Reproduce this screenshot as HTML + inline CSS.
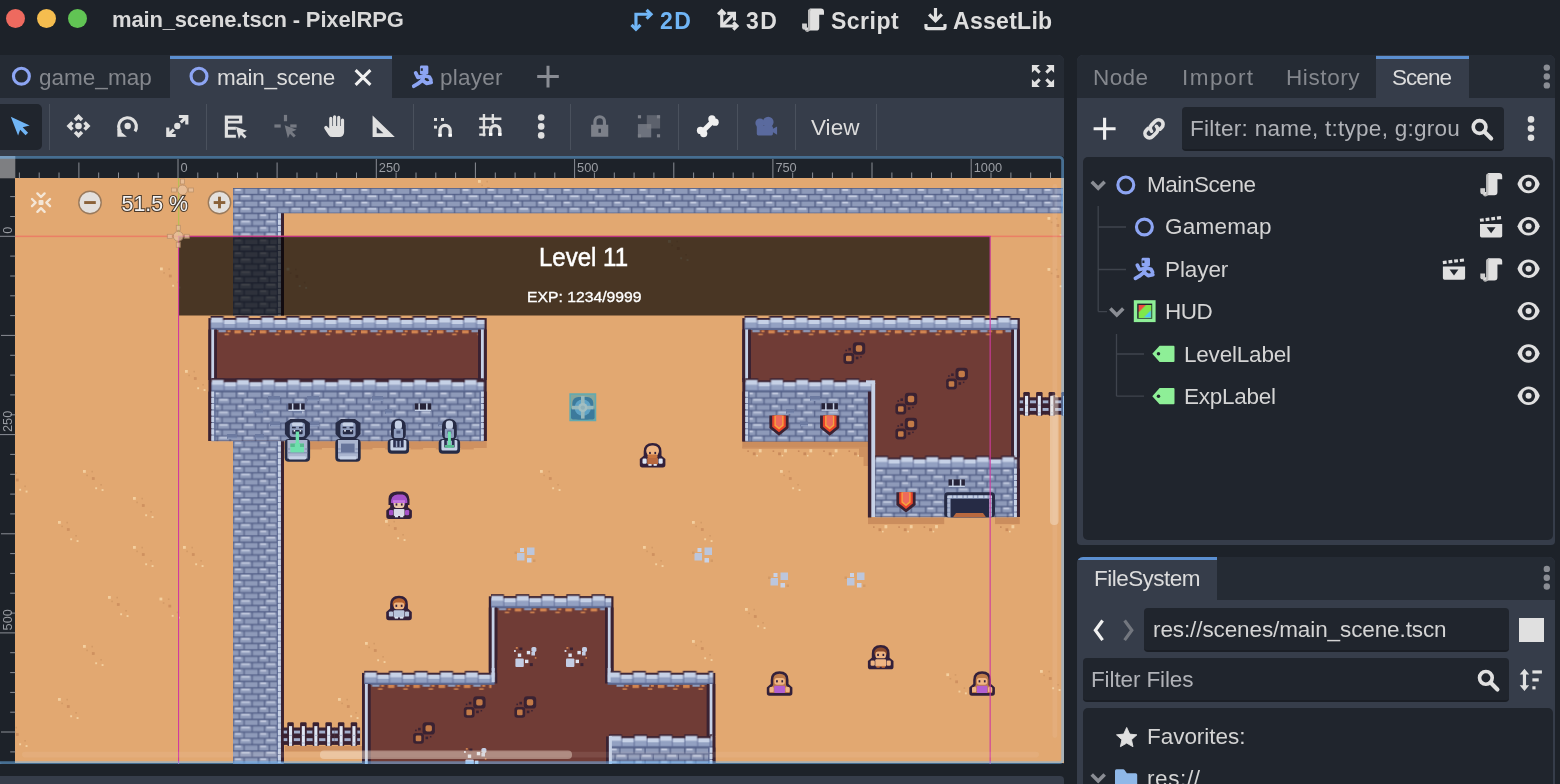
<!DOCTYPE html>
<html><head><meta charset="utf-8"><title>Godot</title>
<style>
*{box-sizing:border-box;margin:0;padding:0}
html,body{width:1560px;height:784px;overflow:hidden;background:#1d2229;font-family:"Liberation Sans",sans-serif;color:#dcdcdc}
.abs{position:absolute}
.t{position:absolute;white-space:nowrap;line-height:1;will-change:transform}
#title{left:113px;top:8px;font-size:21px;font-weight:bold;color:#d9d9d9}
.tl{position:absolute;top:9px;width:19px;height:19px;border-radius:50%}
.mode{position:absolute;top:8px;font-size:23px;font-weight:bold;color:#dedede}
/* panels */
#mainpanel{left:0;top:55px;width:1064px;height:709px;background:#363d4a;border-radius:0 6px 0 0}
#maintabs{left:0;top:55px;width:1064px;height:43px;background:#252b34;border-radius:0 6px 0 0}
.tab{position:absolute;top:55px;height:43px;background:#363d4a}
.tab .line{position:absolute;left:0;right:0;top:0.7px;height:3px;background:#5b8fd0}
.tabtxt{position:absolute;font-size:22px;top:66px;white-space:nowrap;line-height:1}
.dim{color:#85888e}
.sep{position:absolute;top:104px;width:1px;height:46px;background:#4a515d}
#dockR{left:1077px;top:55px;width:478px;height:490px;background:#363d4a;border-radius:6px 6px 4px 4px}
#dockRtabs{left:1077px;top:55px;width:478px;height:43px;background:#252b34;border-radius:6px 6px 0 0}
#tree{left:1083px;top:157px;width:470px;height:383px;background:#20252d;border-radius:5px}
#dockF{left:1077px;top:557px;width:478px;height:240px;background:#363d4a;border-radius:6px 6px 0 0}
#dockFtabs{left:1077px;top:557px;width:478px;height:43px;background:#252b34;border-radius:6px 6px 0 0}
.input{position:absolute;background:#20252d;border-radius:4px;border-bottom:2px solid #1a1e25}
.tr{position:absolute;font-size:22px;white-space:nowrap;line-height:1;color:#d6d6d6}
svg{position:absolute;overflow:visible;will-change:transform}
</style></head><body>
<!-- title bar -->
<div class="tl" style="left:6px;background:#ee6a5f"></div>
<div class="tl" style="left:37px;background:#f5bd4f"></div>
<div class="tl" style="left:68px;background:#61c454"></div>

<!-- main panel -->
<div id="mainpanel" class="abs"></div>
<div id="maintabs" class="abs"></div>
<div class="tab" style="left:170px;width:222px"><div class="line"></div></div>

<!-- toolbar -->
<div class="abs" style="left:0;top:104px;width:42px;height:46px;background:#20252d;border-radius:0 5px 5px 0"></div>
<div class="sep" style="left:49px"></div>
<div class="sep" style="left:206px"></div>
<div class="sep" style="left:413px"></div>
<div class="sep" style="left:570px"></div>
<div class="sep" style="left:678px"></div>
<div class="sep" style="left:737px"></div>
<div class="sep" style="left:795px"></div>
<div class="sep" style="left:876px"></div>

<!-- right dock -->
<div id="dockR" class="abs"></div>
<div id="dockRtabs" class="abs"></div>
<div class="tab" style="left:1376px;width:93px"><div class="line"></div></div>
<div class="input" style="left:1181.5px;top:107px;width:322.5px;height:44px"></div>
<div id="tree" class="abs"></div>

<!-- filesystem dock -->
<div id="dockF" class="abs"></div>
<div id="dockFtabs" class="abs"></div>
<div class="tab" style="left:1077px;top:557px;width:140px;border-radius:6px 0 0 0;overflow:hidden"><div class="line" style="top:0"></div></div>
<div class="input" style="left:1144px;top:608px;width:365px;height:44px"></div>
<div class="abs" style="left:1519px;top:618px;width:25px;height:24px;background:#e0e0e0"></div>
<div class="input" style="left:1083px;top:658px;width:426px;height:44px"></div>
<div class="abs" style="left:1083px;top:708px;width:470px;height:90px;background:#20252d;border-radius:5px"></div>

<!-- bottom strip -->
<div class="abs" style="left:0;top:776px;width:1064px;height:10px;background:#363d4a;border-radius:0 4px 0 0"></div>
<svg style="left:0;top:156px" width="1064" height="609" viewBox="0 156 1064 609" shape-rendering="auto">
<defs>
<pattern id="bk" width="25.3" height="12.65" patternUnits="userSpaceOnUse">
<rect width="25.3" height="12.65" fill="#525e86"/>
<rect x="0.6" y="0.8" width="9.6" height="5" fill="#8e9ab9"/><rect x="1.6" y="1.1" width="6" height="1.6" fill="#cfd6e8"/>
<rect x="11.4" y="0.8" width="13.1" height="5" fill="#8e9ab9"/>
<rect x="-5.8" y="7.1" width="11.2" height="5" fill="#8e9ab9"/><rect x="19.5" y="7.1" width="11.2" height="5" fill="#8e9ab9"/>
<rect x="6.6" y="7.1" width="11.7" height="5" fill="#8e9ab9"/><rect x="8" y="7.4" width="8.6" height="1.6" fill="#cfd6e8"/>
</pattern>
<pattern id="cap" width="25.3" height="14" patternUnits="userSpaceOnUse">
<rect x="0" y="3" width="25.3" height="11" fill="#63709a"/>
<rect x="-0.6" y="0" width="13.6" height="4" fill="#3a2232"/><rect x="12.4" y="2.1" width="13.4" height="2.4" fill="#3a2232"/><rect x="24.7" y="0" width="0.6" height="4" fill="#3a2232"/>
<rect x="0.5" y="1.6" width="11.8" height="5.2" fill="#c6d1e6"/><rect x="0.5" y="6.8" width="11.8" height="5" fill="#93a1c2"/>
<rect x="13.2" y="3.8" width="11.6" height="4.2" fill="#c6d1e6"/><rect x="13.2" y="8" width="11.6" height="3.8" fill="#93a1c2"/>
<rect x="0" y="12.3" width="25.3" height="1.7" fill="#5d6a92"/>
</pattern>
<pattern id="deb" width="25.3" height="8" patternUnits="userSpaceOnUse">
<rect x="1.5" y="0.3" width="7.5" height="2.6" fill="#8f9dbe"/><rect x="10.5" y="1" width="3" height="2" fill="#d18450"/>
<rect x="17.5" y="1" width="6.5" height="3.2" fill="#d18450"/><rect x="7.5" y="4.4" width="4.5" height="1.6" fill="#d18450"/>
</pattern>
<clipPath id="vp"><rect x="15" y="178" width="1049" height="586"/></clipPath>
</defs>
<rect x="0" y="156" width="1064" height="608" rx="3" fill="#1d2229"/>
<rect x="0" y="156" width="15.3" height="22.3" fill="#7e7f82"/>
<g clip-path="url(#vp)">
<rect x="15" y="178" width="1049" height="585" fill="#e2a871"/>
<rect x="160.0" y="267.5" width="2.8" height="2.8" fill="#f3cf9f"/>
<rect x="163.3" y="272.1" width="1.6" height="1.6" fill="#d39a66"/>
<rect x="168.4" y="268.3" width="1.6" height="1.6" fill="#d39a66"/>
<rect x="168.9" y="274.6" width="2.8" height="2.8" fill="#cf9160"/>
<rect x="177.3" y="281.5" width="1.6" height="1.6" fill="#d39a66"/>
<rect x="172.2" y="284.8" width="1.9" height="1.9" fill="#f3cf9f"/>
<rect x="178.6" y="286.6" width="1.9" height="1.9" fill="#f3cf9f"/>
<rect x="286.6" y="267.8" width="2.8" height="2.8" fill="#f3cf9f"/>
<rect x="289.9" y="272.4" width="1.6" height="1.6" fill="#d39a66"/>
<rect x="295.0" y="268.6" width="1.6" height="1.6" fill="#d39a66"/>
<rect x="295.5" y="274.9" width="2.8" height="2.8" fill="#cf9160"/>
<rect x="303.9" y="281.8" width="1.6" height="1.6" fill="#d39a66"/>
<rect x="298.8" y="285.1" width="1.9" height="1.9" fill="#f3cf9f"/>
<rect x="305.2" y="286.9" width="1.9" height="1.9" fill="#f3cf9f"/>
<rect x="185.0" y="370.0" width="2.8" height="2.8" fill="#f3cf9f"/>
<rect x="188.3" y="374.6" width="1.6" height="1.6" fill="#d39a66"/>
<rect x="193.4" y="370.8" width="1.6" height="1.6" fill="#d39a66"/>
<rect x="193.9" y="377.1" width="2.8" height="2.8" fill="#cf9160"/>
<rect x="202.3" y="384.0" width="1.6" height="1.6" fill="#d39a66"/>
<rect x="197.2" y="387.3" width="1.9" height="1.9" fill="#f3cf9f"/>
<rect x="203.6" y="389.1" width="1.9" height="1.9" fill="#f3cf9f"/>
<rect x="83.0" y="470.0" width="2.8" height="2.8" fill="#f3cf9f"/>
<rect x="86.3" y="474.6" width="1.6" height="1.6" fill="#d39a66"/>
<rect x="91.4" y="470.8" width="1.6" height="1.6" fill="#d39a66"/>
<rect x="91.9" y="477.1" width="2.8" height="2.8" fill="#cf9160"/>
<rect x="100.3" y="484.0" width="1.6" height="1.6" fill="#d39a66"/>
<rect x="95.2" y="487.3" width="1.9" height="1.9" fill="#f3cf9f"/>
<rect x="101.6" y="489.1" width="1.9" height="1.9" fill="#f3cf9f"/>
<rect x="133.0" y="497.0" width="2.8" height="2.8" fill="#f3cf9f"/>
<rect x="136.3" y="501.6" width="1.6" height="1.6" fill="#d39a66"/>
<rect x="141.4" y="497.8" width="1.6" height="1.6" fill="#d39a66"/>
<rect x="141.9" y="504.1" width="2.8" height="2.8" fill="#cf9160"/>
<rect x="150.3" y="511.0" width="1.6" height="1.6" fill="#d39a66"/>
<rect x="145.2" y="514.3" width="1.9" height="1.9" fill="#f3cf9f"/>
<rect x="151.6" y="516.1" width="1.9" height="1.9" fill="#f3cf9f"/>
<rect x="58.0" y="521.0" width="2.8" height="2.8" fill="#f3cf9f"/>
<rect x="61.3" y="525.6" width="1.6" height="1.6" fill="#d39a66"/>
<rect x="66.4" y="521.8" width="1.6" height="1.6" fill="#d39a66"/>
<rect x="66.9" y="528.1" width="2.8" height="2.8" fill="#cf9160"/>
<rect x="75.3" y="535.0" width="1.6" height="1.6" fill="#d39a66"/>
<rect x="70.2" y="538.3" width="1.9" height="1.9" fill="#f3cf9f"/>
<rect x="76.6" y="540.1" width="1.9" height="1.9" fill="#f3cf9f"/>
<rect x="108.0" y="596.0" width="2.8" height="2.8" fill="#f3cf9f"/>
<rect x="111.3" y="600.6" width="1.6" height="1.6" fill="#d39a66"/>
<rect x="116.4" y="596.8" width="1.6" height="1.6" fill="#d39a66"/>
<rect x="116.9" y="603.1" width="2.8" height="2.8" fill="#cf9160"/>
<rect x="125.3" y="610.0" width="1.6" height="1.6" fill="#d39a66"/>
<rect x="120.2" y="613.3" width="1.9" height="1.9" fill="#f3cf9f"/>
<rect x="126.6" y="615.1" width="1.9" height="1.9" fill="#f3cf9f"/>
<rect x="159.5" y="597.6" width="2.8" height="2.8" fill="#f3cf9f"/>
<rect x="162.8" y="602.2" width="1.6" height="1.6" fill="#d39a66"/>
<rect x="167.9" y="598.4" width="1.6" height="1.6" fill="#d39a66"/>
<rect x="168.4" y="604.7" width="2.8" height="2.8" fill="#cf9160"/>
<rect x="176.8" y="611.6" width="1.6" height="1.6" fill="#d39a66"/>
<rect x="171.7" y="614.9" width="1.9" height="1.9" fill="#f3cf9f"/>
<rect x="178.1" y="616.7" width="1.9" height="1.9" fill="#f3cf9f"/>
<rect x="83.0" y="645.0" width="2.8" height="2.8" fill="#f3cf9f"/>
<rect x="86.3" y="649.6" width="1.6" height="1.6" fill="#d39a66"/>
<rect x="91.4" y="645.8" width="1.6" height="1.6" fill="#d39a66"/>
<rect x="91.9" y="652.1" width="2.8" height="2.8" fill="#cf9160"/>
<rect x="100.3" y="659.0" width="1.6" height="1.6" fill="#d39a66"/>
<rect x="95.2" y="662.3" width="1.9" height="1.9" fill="#f3cf9f"/>
<rect x="101.6" y="664.1" width="1.9" height="1.9" fill="#f3cf9f"/>
<rect x="58.0" y="698.0" width="2.8" height="2.8" fill="#f3cf9f"/>
<rect x="61.3" y="702.6" width="1.6" height="1.6" fill="#d39a66"/>
<rect x="66.4" y="698.8" width="1.6" height="1.6" fill="#d39a66"/>
<rect x="66.9" y="705.1" width="2.8" height="2.8" fill="#cf9160"/>
<rect x="75.3" y="712.0" width="1.6" height="1.6" fill="#d39a66"/>
<rect x="70.2" y="715.3" width="1.9" height="1.9" fill="#f3cf9f"/>
<rect x="76.6" y="717.1" width="1.9" height="1.9" fill="#f3cf9f"/>
<rect x="133.0" y="546.0" width="2.8" height="2.8" fill="#f3cf9f"/>
<rect x="136.3" y="550.6" width="1.6" height="1.6" fill="#d39a66"/>
<rect x="141.4" y="546.8" width="1.6" height="1.6" fill="#d39a66"/>
<rect x="141.9" y="553.1" width="2.8" height="2.8" fill="#cf9160"/>
<rect x="150.3" y="560.0" width="1.6" height="1.6" fill="#d39a66"/>
<rect x="145.2" y="563.3" width="1.9" height="1.9" fill="#f3cf9f"/>
<rect x="151.6" y="565.1" width="1.9" height="1.9" fill="#f3cf9f"/>
<rect x="183.0" y="546.0" width="2.8" height="2.8" fill="#f3cf9f"/>
<rect x="186.3" y="550.6" width="1.6" height="1.6" fill="#d39a66"/>
<rect x="191.4" y="546.8" width="1.6" height="1.6" fill="#d39a66"/>
<rect x="191.9" y="553.1" width="2.8" height="2.8" fill="#cf9160"/>
<rect x="200.3" y="560.0" width="1.6" height="1.6" fill="#d39a66"/>
<rect x="195.2" y="563.3" width="1.9" height="1.9" fill="#f3cf9f"/>
<rect x="201.6" y="565.1" width="1.9" height="1.9" fill="#f3cf9f"/>
<rect x="7.0" y="471.5" width="2.8" height="2.8" fill="#f3cf9f"/>
<rect x="10.3" y="476.1" width="1.6" height="1.6" fill="#d39a66"/>
<rect x="15.4" y="472.3" width="1.6" height="1.6" fill="#d39a66"/>
<rect x="15.9" y="478.6" width="2.8" height="2.8" fill="#cf9160"/>
<rect x="24.3" y="485.5" width="1.6" height="1.6" fill="#d39a66"/>
<rect x="19.2" y="488.8" width="1.9" height="1.9" fill="#f3cf9f"/>
<rect x="25.6" y="490.6" width="1.9" height="1.9" fill="#f3cf9f"/>
<rect x="7.0" y="726.0" width="2.8" height="2.8" fill="#f3cf9f"/>
<rect x="10.3" y="730.6" width="1.6" height="1.6" fill="#d39a66"/>
<rect x="15.4" y="726.8" width="1.6" height="1.6" fill="#d39a66"/>
<rect x="15.9" y="733.1" width="2.8" height="2.8" fill="#cf9160"/>
<rect x="24.3" y="740.0" width="1.6" height="1.6" fill="#d39a66"/>
<rect x="19.2" y="743.3" width="1.9" height="1.9" fill="#f3cf9f"/>
<rect x="25.6" y="745.1" width="1.9" height="1.9" fill="#f3cf9f"/>
<rect x="540.0" y="470.0" width="2.8" height="2.8" fill="#f3cf9f"/>
<rect x="543.3" y="474.6" width="1.6" height="1.6" fill="#d39a66"/>
<rect x="548.4" y="470.8" width="1.6" height="1.6" fill="#d39a66"/>
<rect x="548.9" y="477.1" width="2.8" height="2.8" fill="#cf9160"/>
<rect x="557.3" y="484.0" width="1.6" height="1.6" fill="#d39a66"/>
<rect x="552.2" y="487.3" width="1.9" height="1.9" fill="#f3cf9f"/>
<rect x="558.6" y="489.1" width="1.9" height="1.9" fill="#f3cf9f"/>
<rect x="385.0" y="520.0" width="2.8" height="2.8" fill="#f3cf9f"/>
<rect x="388.3" y="524.6" width="1.6" height="1.6" fill="#d39a66"/>
<rect x="393.4" y="520.8" width="1.6" height="1.6" fill="#d39a66"/>
<rect x="393.9" y="527.1" width="2.8" height="2.8" fill="#cf9160"/>
<rect x="402.3" y="534.0" width="1.6" height="1.6" fill="#d39a66"/>
<rect x="397.2" y="537.3" width="1.9" height="1.9" fill="#f3cf9f"/>
<rect x="403.6" y="539.1" width="1.9" height="1.9" fill="#f3cf9f"/>
<rect x="643.0" y="546.0" width="2.8" height="2.8" fill="#f3cf9f"/>
<rect x="646.3" y="550.6" width="1.6" height="1.6" fill="#d39a66"/>
<rect x="651.4" y="546.8" width="1.6" height="1.6" fill="#d39a66"/>
<rect x="651.9" y="553.1" width="2.8" height="2.8" fill="#cf9160"/>
<rect x="660.3" y="560.0" width="1.6" height="1.6" fill="#d39a66"/>
<rect x="655.2" y="563.3" width="1.9" height="1.9" fill="#f3cf9f"/>
<rect x="661.6" y="565.1" width="1.9" height="1.9" fill="#f3cf9f"/>
<rect x="692.0" y="521.0" width="2.8" height="2.8" fill="#f3cf9f"/>
<rect x="695.3" y="525.6" width="1.6" height="1.6" fill="#d39a66"/>
<rect x="700.4" y="521.8" width="1.6" height="1.6" fill="#d39a66"/>
<rect x="700.9" y="528.1" width="2.8" height="2.8" fill="#cf9160"/>
<rect x="709.3" y="535.0" width="1.6" height="1.6" fill="#d39a66"/>
<rect x="704.2" y="538.3" width="1.9" height="1.9" fill="#f3cf9f"/>
<rect x="710.6" y="540.1" width="1.9" height="1.9" fill="#f3cf9f"/>
<rect x="466.0" y="700.0" width="2.8" height="2.8" fill="#f3cf9f"/>
<rect x="469.3" y="704.6" width="1.6" height="1.6" fill="#d39a66"/>
<rect x="474.4" y="700.8" width="1.6" height="1.6" fill="#d39a66"/>
<rect x="474.9" y="707.1" width="2.8" height="2.8" fill="#cf9160"/>
<rect x="483.3" y="714.0" width="1.6" height="1.6" fill="#d39a66"/>
<rect x="478.2" y="717.3" width="1.9" height="1.9" fill="#f3cf9f"/>
<rect x="484.6" y="719.1" width="1.9" height="1.9" fill="#f3cf9f"/>
<rect x="338.0" y="698.0" width="2.8" height="2.8" fill="#f3cf9f"/>
<rect x="341.3" y="702.6" width="1.6" height="1.6" fill="#d39a66"/>
<rect x="346.4" y="698.8" width="1.6" height="1.6" fill="#d39a66"/>
<rect x="346.9" y="705.1" width="2.8" height="2.8" fill="#cf9160"/>
<rect x="355.3" y="712.0" width="1.6" height="1.6" fill="#d39a66"/>
<rect x="350.2" y="715.3" width="1.9" height="1.9" fill="#f3cf9f"/>
<rect x="356.6" y="717.1" width="1.9" height="1.9" fill="#f3cf9f"/>
<rect x="365.0" y="642.0" width="2.8" height="2.8" fill="#f3cf9f"/>
<rect x="368.3" y="646.6" width="1.6" height="1.6" fill="#d39a66"/>
<rect x="373.4" y="642.8" width="1.6" height="1.6" fill="#d39a66"/>
<rect x="373.9" y="649.1" width="2.8" height="2.8" fill="#cf9160"/>
<rect x="382.3" y="656.0" width="1.6" height="1.6" fill="#d39a66"/>
<rect x="377.2" y="659.3" width="1.9" height="1.9" fill="#f3cf9f"/>
<rect x="383.6" y="661.1" width="1.9" height="1.9" fill="#f3cf9f"/>
<rect x="1047.5" y="217.0" width="2.8" height="2.8" fill="#f3cf9f"/>
<rect x="1050.8" y="221.6" width="1.6" height="1.6" fill="#d39a66"/>
<rect x="1055.9" y="217.8" width="1.6" height="1.6" fill="#d39a66"/>
<rect x="1056.4" y="224.1" width="2.8" height="2.8" fill="#cf9160"/>
<rect x="1064.8" y="231.0" width="1.6" height="1.6" fill="#d39a66"/>
<rect x="1059.7" y="234.3" width="1.9" height="1.9" fill="#f3cf9f"/>
<rect x="1066.1" y="236.1" width="1.9" height="1.9" fill="#f3cf9f"/>
<rect x="1047.5" y="268.0" width="2.8" height="2.8" fill="#f3cf9f"/>
<rect x="1050.8" y="272.6" width="1.6" height="1.6" fill="#d39a66"/>
<rect x="1055.9" y="268.8" width="1.6" height="1.6" fill="#d39a66"/>
<rect x="1056.4" y="275.1" width="2.8" height="2.8" fill="#cf9160"/>
<rect x="1064.8" y="282.0" width="1.6" height="1.6" fill="#d39a66"/>
<rect x="1059.7" y="285.3" width="1.9" height="1.9" fill="#f3cf9f"/>
<rect x="1066.1" y="287.1" width="1.9" height="1.9" fill="#f3cf9f"/>
<rect x="478.0" y="180.0" width="2.8" height="2.8" fill="#f3cf9f"/>
<rect x="481.3" y="184.6" width="1.6" height="1.6" fill="#d39a66"/>
<rect x="486.4" y="180.8" width="1.6" height="1.6" fill="#d39a66"/>
<rect x="486.9" y="187.1" width="2.8" height="2.8" fill="#cf9160"/>
<rect x="495.3" y="194.0" width="1.6" height="1.6" fill="#d39a66"/>
<rect x="490.2" y="197.3" width="1.9" height="1.9" fill="#f3cf9f"/>
<rect x="496.6" y="199.1" width="1.9" height="1.9" fill="#f3cf9f"/>
<rect x="780.0" y="470.0" width="2.8" height="2.8" fill="#f3cf9f"/>
<rect x="783.3" y="474.6" width="1.6" height="1.6" fill="#d39a66"/>
<rect x="788.4" y="470.8" width="1.6" height="1.6" fill="#d39a66"/>
<rect x="788.9" y="477.1" width="2.8" height="2.8" fill="#cf9160"/>
<rect x="797.3" y="484.0" width="1.6" height="1.6" fill="#d39a66"/>
<rect x="792.2" y="487.3" width="1.9" height="1.9" fill="#f3cf9f"/>
<rect x="798.6" y="489.1" width="1.9" height="1.9" fill="#f3cf9f"/>
<rect x="946.3" y="673.3" width="2.8" height="2.8" fill="#f3cf9f"/>
<rect x="949.6" y="677.9" width="1.6" height="1.6" fill="#d39a66"/>
<rect x="954.7" y="674.1" width="1.6" height="1.6" fill="#d39a66"/>
<rect x="955.2" y="680.4" width="2.8" height="2.8" fill="#cf9160"/>
<rect x="963.6" y="687.3" width="1.6" height="1.6" fill="#d39a66"/>
<rect x="958.5" y="690.6" width="1.9" height="1.9" fill="#f3cf9f"/>
<rect x="964.9" y="692.4" width="1.9" height="1.9" fill="#f3cf9f"/>
<rect x="1040.0" y="670.0" width="2.8" height="2.8" fill="#f3cf9f"/>
<rect x="1043.3" y="674.6" width="1.6" height="1.6" fill="#d39a66"/>
<rect x="1048.4" y="670.8" width="1.6" height="1.6" fill="#d39a66"/>
<rect x="1048.9" y="677.1" width="2.8" height="2.8" fill="#cf9160"/>
<rect x="1057.3" y="684.0" width="1.6" height="1.6" fill="#d39a66"/>
<rect x="1052.2" y="687.3" width="1.9" height="1.9" fill="#f3cf9f"/>
<rect x="1058.6" y="689.1" width="1.9" height="1.9" fill="#f3cf9f"/>
<rect x="692.0" y="640.0" width="2.8" height="2.8" fill="#f3cf9f"/>
<rect x="695.3" y="644.6" width="1.6" height="1.6" fill="#d39a66"/>
<rect x="700.4" y="640.8" width="1.6" height="1.6" fill="#d39a66"/>
<rect x="700.9" y="647.1" width="2.8" height="2.8" fill="#cf9160"/>
<rect x="709.3" y="654.0" width="1.6" height="1.6" fill="#d39a66"/>
<rect x="704.2" y="657.3" width="1.9" height="1.9" fill="#f3cf9f"/>
<rect x="710.6" y="659.1" width="1.9" height="1.9" fill="#f3cf9f"/>
<rect x="605.0" y="750.0" width="2.8" height="2.8" fill="#f3cf9f"/>
<rect x="608.3" y="754.6" width="1.6" height="1.6" fill="#d39a66"/>
<rect x="613.4" y="750.8" width="1.6" height="1.6" fill="#d39a66"/>
<rect x="613.9" y="757.1" width="2.8" height="2.8" fill="#cf9160"/>
<rect x="622.3" y="764.0" width="1.6" height="1.6" fill="#d39a66"/>
<rect x="617.2" y="767.3" width="1.9" height="1.9" fill="#f3cf9f"/>
<rect x="623.6" y="769.1" width="1.9" height="1.9" fill="#f3cf9f"/>
<rect x="655.0" y="750.0" width="2.8" height="2.8" fill="#f3cf9f"/>
<rect x="658.3" y="754.6" width="1.6" height="1.6" fill="#d39a66"/>
<rect x="663.4" y="750.8" width="1.6" height="1.6" fill="#d39a66"/>
<rect x="663.9" y="757.1" width="2.8" height="2.8" fill="#cf9160"/>
<rect x="672.3" y="764.0" width="1.6" height="1.6" fill="#d39a66"/>
<rect x="667.2" y="767.3" width="1.9" height="1.9" fill="#f3cf9f"/>
<rect x="673.6" y="769.1" width="1.9" height="1.9" fill="#f3cf9f"/>
<rect x="520.0" y="608.0" width="2.8" height="2.8" fill="#f3cf9f"/>
<rect x="523.3" y="612.6" width="1.6" height="1.6" fill="#d39a66"/>
<rect x="528.4" y="608.8" width="1.6" height="1.6" fill="#d39a66"/>
<rect x="528.9" y="615.1" width="2.8" height="2.8" fill="#cf9160"/>
<rect x="537.3" y="622.0" width="1.6" height="1.6" fill="#d39a66"/>
<rect x="532.2" y="625.3" width="1.9" height="1.9" fill="#f3cf9f"/>
<rect x="538.6" y="627.1" width="1.9" height="1.9" fill="#f3cf9f"/>
<rect x="745.0" y="608.0" width="2.8" height="2.8" fill="#f3cf9f"/>
<rect x="748.3" y="612.6" width="1.6" height="1.6" fill="#d39a66"/>
<rect x="753.4" y="608.8" width="1.6" height="1.6" fill="#d39a66"/>
<rect x="753.9" y="615.1" width="2.8" height="2.8" fill="#cf9160"/>
<rect x="762.3" y="622.0" width="1.6" height="1.6" fill="#d39a66"/>
<rect x="757.2" y="625.3" width="1.9" height="1.9" fill="#f3cf9f"/>
<rect x="763.6" y="627.1" width="1.9" height="1.9" fill="#f3cf9f"/>
<rect x="668.0" y="240.0" width="2.8" height="2.8" fill="#f3cf9f"/>
<rect x="671.3" y="244.6" width="1.6" height="1.6" fill="#d39a66"/>
<rect x="676.4" y="240.8" width="1.6" height="1.6" fill="#d39a66"/>
<rect x="676.9" y="247.1" width="2.8" height="2.8" fill="#cf9160"/>
<rect x="685.3" y="254.0" width="1.6" height="1.6" fill="#d39a66"/>
<rect x="680.2" y="257.3" width="1.9" height="1.9" fill="#f3cf9f"/>
<rect x="686.6" y="259.1" width="1.9" height="1.9" fill="#f3cf9f"/>
<svg x="233.3" y="188.0" width="830.0" height="25.3" overflow="hidden"><rect width="830.0" height="25.3" fill="url(#bk)"/></svg>
<svg x="233.3" y="213.3" width="50.6" height="552.0" overflow="hidden"><rect width="50.6" height="552.0" fill="url(#bk)"/></svg>
<rect x="276.8" y="213.3" width="1.2" height="549.0" fill="#5a6791"/>
<line x1="279.4" y1="213.3" x2="279.4" y2="763" stroke="#c6d1e6" stroke-width="3" stroke-dasharray="5.2 1.1"/>
<rect x="281.0" y="213.3" width="3.0" height="549.0" fill="#3a2232"/>
<rect x="284.0" y="441.0" width="202.7" height="7.0" fill="#cf9160"/>
<path d="M284,447.9v1.6h12.6v-1.6h12.7v1.6h12.6v-1.6h12.7v1.6h12.6v-1.6h12.7v1.6h12.6v-1.6h12.7v1.6h12.6v-1.6h12.7v1.6h12.6v-1.6h12.7v1.6h12.6v-1.6h12.7v1.6h12.6v-1.6h12.7z" fill="#cf9160"/>
<rect x="208.4" y="315.6" width="278.3" height="3.0" fill="#e2a871"/>
<rect x="208.4" y="318.1" width="278.3" height="122.9" fill="#3a2232"/>
<rect x="216.9" y="329.0" width="261.3" height="51.5" fill="#703c36"/>
<svg x="216.9" y="329.3" width="261.3" height="8.0" overflow="hidden"><rect width="261.3" height="8.0" fill="url(#deb)"/></svg>
<svg x="210.6" y="316.0" width="273.9" height="14.0" overflow="hidden"><rect width="273.9" height="14.0" fill="url(#cap)"/></svg>
<rect x="208.4" y="329.5" width="2.9" height="50.5" fill="#3a2232"/>
<rect x="211.3" y="329.5" width="3.0" height="50.5" fill="#c6d1e6"/>
<rect x="214.3" y="329.5" width="2.6" height="50.5" fill="#3a2232"/>
<rect x="483.8" y="329.5" width="2.9" height="50.5" fill="#3a2232"/>
<rect x="480.8" y="329.5" width="3.0" height="50.5" fill="#c6d1e6"/>
<rect x="478.2" y="329.5" width="2.6" height="50.5" fill="#3a2232"/>
<rect x="211.3" y="378.3" width="272.5" height="2.0" fill="#3a2232"/>
<svg x="211.3" y="378.3" width="272.5" height="14.0" overflow="hidden"><rect width="272.5" height="14.0" fill="url(#cap)"/></svg>
<svg x="211.3" y="391.5" width="272.5" height="49.5" overflow="hidden"><rect width="272.5" height="49.5" fill="url(#bk)"/></svg>
<rect x="208.4" y="391.5" width="2.9" height="49.5" fill="#3a2232"/>
<line x1="212.8" y1="391.5" x2="212.8" y2="441.0" stroke="#c6d1e6" stroke-width="3" stroke-dasharray="5.2 1.1"/>
<rect x="214.3" y="391.5" width="1.3" height="49.5" fill="#5a6791"/>
<rect x="483.8" y="391.5" width="2.9" height="49.5" fill="#3a2232"/>
<line x1="482.3" y1="391.5" x2="482.3" y2="441.0" stroke="#c6d1e6" stroke-width="3" stroke-dasharray="5.2 1.1"/>
<rect x="479.5" y="391.5" width="1.3" height="49.5" fill="#5a6791"/>
<rect x="742.3" y="441.4" width="126.0" height="6.8" fill="#cb8d5d"/>
<rect x="747.3" y="450.4" width="1.6" height="1.6" fill="#c98a5b"/>
<rect x="752.8" y="452.4" width="2.8" height="2.8" fill="#c98a5b"/>
<rect x="758.8" y="449.2" width="2.8" height="3.2" fill="#f3cf9f"/>
<rect x="756.3" y="454.9" width="1.6" height="1.6" fill="#f3cf9f"/>
<rect x="772.6" y="450.4" width="1.6" height="1.6" fill="#c98a5b"/>
<rect x="778.1" y="452.4" width="2.8" height="2.8" fill="#c98a5b"/>
<rect x="784.1" y="449.2" width="2.8" height="3.2" fill="#f3cf9f"/>
<rect x="781.6" y="454.9" width="1.6" height="1.6" fill="#f3cf9f"/>
<rect x="797.9" y="450.4" width="1.6" height="1.6" fill="#c98a5b"/>
<rect x="803.4" y="452.4" width="2.8" height="2.8" fill="#c98a5b"/>
<rect x="809.4" y="449.2" width="2.8" height="3.2" fill="#f3cf9f"/>
<rect x="806.9" y="454.9" width="1.6" height="1.6" fill="#f3cf9f"/>
<rect x="823.2" y="450.4" width="1.6" height="1.6" fill="#c98a5b"/>
<rect x="828.7" y="452.4" width="2.8" height="2.8" fill="#c98a5b"/>
<rect x="834.7" y="449.2" width="2.8" height="3.2" fill="#f3cf9f"/>
<rect x="832.2" y="454.9" width="1.6" height="1.6" fill="#f3cf9f"/>
<rect x="848.5" y="450.4" width="1.6" height="1.6" fill="#c98a5b"/>
<rect x="854.0" y="452.4" width="2.8" height="2.8" fill="#c98a5b"/>
<rect x="860.0" y="449.2" width="2.8" height="3.2" fill="#f3cf9f"/>
<rect x="857.5" y="454.9" width="1.6" height="1.6" fill="#f3cf9f"/>
<rect x="868.0" y="517.3" width="76.2" height="6.8" fill="#cb8d5d"/>
<rect x="873.0" y="526.3" width="1.6" height="1.6" fill="#c98a5b"/>
<rect x="878.5" y="528.3" width="2.8" height="2.8" fill="#c98a5b"/>
<rect x="884.5" y="525.1" width="2.8" height="3.2" fill="#f3cf9f"/>
<rect x="882.0" y="530.8" width="1.6" height="1.6" fill="#f3cf9f"/>
<rect x="898.3" y="526.3" width="1.6" height="1.6" fill="#c98a5b"/>
<rect x="903.8" y="528.3" width="2.8" height="2.8" fill="#c98a5b"/>
<rect x="909.8" y="525.1" width="2.8" height="3.2" fill="#f3cf9f"/>
<rect x="907.3" y="530.8" width="1.6" height="1.6" fill="#f3cf9f"/>
<rect x="923.6" y="526.3" width="1.6" height="1.6" fill="#c98a5b"/>
<rect x="929.1" y="528.3" width="2.8" height="2.8" fill="#c98a5b"/>
<rect x="935.1" y="525.1" width="2.8" height="3.2" fill="#f3cf9f"/>
<rect x="932.6" y="530.8" width="1.6" height="1.6" fill="#f3cf9f"/>
<rect x="995.0" y="517.3" width="24.8" height="6.8" fill="#cb8d5d"/>
<rect x="1000.0" y="526.3" width="1.6" height="1.6" fill="#c98a5b"/>
<rect x="1005.5" y="528.3" width="2.8" height="2.8" fill="#c98a5b"/>
<rect x="1011.5" y="525.1" width="2.8" height="3.2" fill="#f3cf9f"/>
<rect x="1009.0" y="530.8" width="1.6" height="1.6" fill="#f3cf9f"/>
<rect x="742.3" y="447.0" width="126.0" height="1.6" fill="#cf9160"/>
<rect x="859.0" y="448.0" width="9.0" height="9.0" fill="#cf9160"/>
<rect x="863.5" y="457.0" width="4.5" height="9.0" fill="#cf9160"/>
<rect x="742.3" y="318.1" width="277.5" height="64.0" fill="#3a2232"/>
<rect x="868.0" y="380.0" width="151.8" height="137.0" fill="#3a2232"/>
<rect x="742.3" y="378.0" width="134.0" height="63.4" fill="#3a2232"/>
<rect x="750.8" y="329.0" width="260.5" height="52.0" fill="#703c36"/>
<rect x="875.2" y="380.0" width="136.1" height="78.0" fill="#703c36"/>
<svg x="750.8" y="329.3" width="260.5" height="8.0" overflow="hidden"><rect width="260.5" height="8.0" fill="url(#deb)"/></svg>
<svg x="744.5" y="316.0" width="273.1" height="14.0" overflow="hidden"><rect width="273.1" height="14.0" fill="url(#cap)"/></svg>
<rect x="742.3" y="329.5" width="2.9" height="50.5" fill="#3a2232"/>
<rect x="745.2" y="329.5" width="3.0" height="50.5" fill="#c6d1e6"/>
<rect x="748.2" y="329.5" width="2.6" height="50.5" fill="#3a2232"/>
<rect x="1016.9" y="329.5" width="2.9" height="128.0" fill="#3a2232"/>
<rect x="1013.9" y="329.5" width="3.0" height="128.0" fill="#c6d1e6"/>
<rect x="1011.3" y="329.5" width="2.6" height="128.0" fill="#3a2232"/>
<svg x="745.2" y="378.3" width="126.5" height="14.0" overflow="hidden"><rect width="126.5" height="14.0" fill="url(#cap)"/></svg>
<svg x="745.2" y="391.5" width="125.0" height="50.0" overflow="hidden"><rect width="125.0" height="50.0" fill="url(#bk)"/></svg>
<rect x="742.3" y="391.5" width="2.9" height="50.0" fill="#3a2232"/>
<line x1="746.7" y1="391.5" x2="746.7" y2="441.5" stroke="#c6d1e6" stroke-width="3" stroke-dasharray="5.2 1.1"/>
<rect x="748.2" y="391.5" width="1.3" height="50.0" fill="#5a6791"/>
<rect x="867.9" y="391.5" width="3.4" height="126.0" fill="#3a2232"/>
<rect x="871.3" y="383.0" width="3.9" height="134.0" fill="#c6d1e6"/>
<rect x="866.0" y="380.3" width="9.2" height="3.5" fill="#c6d1e6"/>
<svg x="875.2" y="455.5" width="141.7" height="14.0" overflow="hidden"><rect width="141.7" height="14.0" fill="url(#cap)"/></svg>
<svg x="875.2" y="468.5" width="141.7" height="48.5" overflow="hidden"><rect width="141.7" height="48.5" fill="url(#bk)"/></svg>
<rect x="1016.9" y="468.5" width="2.9" height="48.5" fill="#3a2232"/>
<line x1="1015.4" y1="468.5" x2="1015.4" y2="517.0" stroke="#c6d1e6" stroke-width="3" stroke-dasharray="5.2 1.1"/>
<rect x="1012.6" y="468.5" width="1.3" height="48.5" fill="#5a6791"/>
<rect x="488.8" y="596.3" width="124.7" height="90.0" fill="#3a2232"/>
<rect x="497.3" y="607.0" width="107.7" height="80.0" fill="#703c36"/>
<svg x="497.3" y="607.3" width="107.7" height="8.0" overflow="hidden"><rect width="107.7" height="8.0" fill="url(#deb)"/></svg>
<svg x="491.0" y="594.2" width="120.3" height="14.0" overflow="hidden"><rect width="120.3" height="14.0" fill="url(#cap)"/></svg>
<rect x="488.8" y="607.5" width="2.9" height="64.0" fill="#3a2232"/>
<rect x="491.7" y="607.5" width="3.0" height="64.0" fill="#c6d1e6"/>
<rect x="494.7" y="607.5" width="2.6" height="64.0" fill="#3a2232"/>
<rect x="610.6" y="607.5" width="2.9" height="64.0" fill="#3a2232"/>
<rect x="607.6" y="607.5" width="3.0" height="64.0" fill="#c6d1e6"/>
<rect x="605.0" y="607.5" width="2.6" height="64.0" fill="#3a2232"/>
<rect x="362.0" y="672.9" width="353.3" height="93.0" fill="#3a2232"/>
<rect x="370.5" y="683.5" width="336.3" height="82.0" fill="#703c36"/>
<rect x="497.3" y="660.0" width="107.7" height="30.0" fill="#703c36"/>
<svg x="370.5" y="683.8" width="121.0" height="8.0" overflow="hidden"><rect width="121.0" height="8.0" fill="url(#deb)"/></svg>
<svg x="615.0" y="683.8" width="92.0" height="8.0" overflow="hidden"><rect width="92.0" height="8.0" fill="url(#deb)"/></svg>
<svg x="364.2" y="670.8" width="130.5" height="14.0" overflow="hidden"><rect width="130.5" height="14.0" fill="url(#cap)"/></svg>
<svg x="607.6" y="670.8" width="105.5" height="14.0" overflow="hidden"><rect width="105.5" height="14.0" fill="url(#cap)"/></svg>
<rect x="491.7" y="668.0" width="3.0" height="14.0" fill="#c6d1e6"/>
<rect x="607.6" y="668.0" width="3.0" height="14.0" fill="#c6d1e6"/>
<rect x="362.0" y="684.0" width="2.9" height="80.0" fill="#3a2232"/>
<rect x="364.9" y="684.0" width="3.0" height="80.0" fill="#c6d1e6"/>
<rect x="367.9" y="684.0" width="2.6" height="80.0" fill="#3a2232"/>
<rect x="712.4" y="684.0" width="2.9" height="52.0" fill="#3a2232"/>
<rect x="709.4" y="684.0" width="3.0" height="52.0" fill="#c6d1e6"/>
<rect x="706.8" y="684.0" width="2.6" height="52.0" fill="#3a2232"/>
<rect x="606.0" y="736.4" width="109.3" height="27.0" fill="#3a2232"/>
<svg x="608.9" y="734.3" width="103.5" height="14.0" overflow="hidden"><rect width="103.5" height="14.0" fill="url(#cap)"/></svg>
<svg x="608.9" y="747.5" width="103.5" height="16.0" overflow="hidden"><rect width="103.5" height="16.0" fill="url(#bk)"/></svg>
<rect x="608.9" y="736.0" width="3.0" height="28.0" fill="#c6d1e6"/>
<rect x="712.4" y="747.5" width="2.9" height="16.0" fill="#3a2232"/>
<line x1="710.9" y1="747.5" x2="710.9" y2="763.5" stroke="#c6d1e6" stroke-width="3" stroke-dasharray="5.2 1.1"/>
<rect x="708.1" y="747.5" width="1.3" height="16.0" fill="#5a6791"/>
<rect x="852.8" y="342.3" width="12.4" height="12.4" fill="#3a2232" rx="3.4"/>
<rect x="855.8" y="345.3" width="6.4" height="6.4" fill="#c27a47" rx="1.8"/>
<rect x="843.4" y="353.1" width="10.8" height="10.8" fill="#3a2232" rx="2.8"/>
<rect x="846.0" y="355.7" width="5.6" height="5.6" fill="#c27a47" rx="1.2"/>
<rect x="848.4" y="347.9" width="2.6" height="2.6" fill="#3a2232"/>
<rect x="845.4" y="349.7" width="1.6" height="1.6" fill="#3a2232"/>
<rect x="855.8" y="356.7" width="2.6" height="2.6" fill="#3a2232"/>
<rect x="860.2" y="356.1" width="1.5" height="1.5" fill="#3a2232"/>
<rect x="955.5" y="367.8" width="12.4" height="12.4" fill="#3a2232" rx="3.4"/>
<rect x="958.5" y="370.8" width="6.4" height="6.4" fill="#c27a47" rx="1.8"/>
<rect x="946.1" y="378.6" width="10.8" height="10.8" fill="#3a2232" rx="2.8"/>
<rect x="948.7" y="381.2" width="5.6" height="5.6" fill="#c27a47" rx="1.2"/>
<rect x="951.1" y="373.4" width="2.6" height="2.6" fill="#3a2232"/>
<rect x="948.1" y="375.2" width="1.6" height="1.6" fill="#3a2232"/>
<rect x="958.5" y="382.2" width="2.6" height="2.6" fill="#3a2232"/>
<rect x="962.9" y="381.6" width="1.5" height="1.5" fill="#3a2232"/>
<rect x="904.8" y="392.8" width="12.4" height="12.4" fill="#3a2232" rx="3.4"/>
<rect x="907.8" y="395.8" width="6.4" height="6.4" fill="#c27a47" rx="1.8"/>
<rect x="895.4" y="403.6" width="10.8" height="10.8" fill="#3a2232" rx="2.8"/>
<rect x="898.0" y="406.2" width="5.6" height="5.6" fill="#c27a47" rx="1.2"/>
<rect x="900.4" y="398.4" width="2.6" height="2.6" fill="#3a2232"/>
<rect x="897.4" y="400.2" width="1.6" height="1.6" fill="#3a2232"/>
<rect x="907.8" y="407.2" width="2.6" height="2.6" fill="#3a2232"/>
<rect x="912.2" y="406.6" width="1.5" height="1.5" fill="#3a2232"/>
<rect x="904.8" y="417.8" width="12.4" height="12.4" fill="#3a2232" rx="3.4"/>
<rect x="907.8" y="420.8" width="6.4" height="6.4" fill="#c27a47" rx="1.8"/>
<rect x="895.4" y="428.6" width="10.8" height="10.8" fill="#3a2232" rx="2.8"/>
<rect x="898.0" y="431.2" width="5.6" height="5.6" fill="#c27a47" rx="1.2"/>
<rect x="900.4" y="423.4" width="2.6" height="2.6" fill="#3a2232"/>
<rect x="897.4" y="425.2" width="1.6" height="1.6" fill="#3a2232"/>
<rect x="907.8" y="432.2" width="2.6" height="2.6" fill="#3a2232"/>
<rect x="912.2" y="431.6" width="1.5" height="1.5" fill="#3a2232"/>
<rect x="473.2" y="696.2" width="12.4" height="12.4" fill="#3a2232" rx="3.4"/>
<rect x="476.2" y="699.2" width="6.4" height="6.4" fill="#c27a47" rx="1.8"/>
<rect x="463.8" y="707.0" width="10.8" height="10.8" fill="#3a2232" rx="2.8"/>
<rect x="466.4" y="709.6" width="5.6" height="5.6" fill="#c27a47" rx="1.2"/>
<rect x="468.8" y="701.8" width="2.6" height="2.6" fill="#3a2232"/>
<rect x="465.8" y="703.6" width="1.6" height="1.6" fill="#3a2232"/>
<rect x="476.2" y="710.6" width="2.6" height="2.6" fill="#3a2232"/>
<rect x="480.6" y="710.0" width="1.5" height="1.5" fill="#3a2232"/>
<rect x="523.8" y="696.2" width="12.4" height="12.4" fill="#3a2232" rx="3.4"/>
<rect x="526.8" y="699.2" width="6.4" height="6.4" fill="#c27a47" rx="1.8"/>
<rect x="514.4" y="707.0" width="10.8" height="10.8" fill="#3a2232" rx="2.8"/>
<rect x="517.0" y="709.6" width="5.6" height="5.6" fill="#c27a47" rx="1.2"/>
<rect x="519.4" y="701.8" width="2.6" height="2.6" fill="#3a2232"/>
<rect x="516.4" y="703.6" width="1.6" height="1.6" fill="#3a2232"/>
<rect x="526.8" y="710.6" width="2.6" height="2.6" fill="#3a2232"/>
<rect x="531.2" y="710.0" width="1.5" height="1.5" fill="#3a2232"/>
<rect x="422.5" y="722.2" width="12.4" height="12.4" fill="#3a2232" rx="3.4"/>
<rect x="425.5" y="725.2" width="6.4" height="6.4" fill="#c27a47" rx="1.8"/>
<rect x="413.1" y="733.0" width="10.8" height="10.8" fill="#3a2232" rx="2.8"/>
<rect x="415.7" y="735.6" width="5.6" height="5.6" fill="#c27a47" rx="1.2"/>
<rect x="418.1" y="727.8" width="2.6" height="2.6" fill="#3a2232"/>
<rect x="415.1" y="729.6" width="1.6" height="1.6" fill="#3a2232"/>
<rect x="425.5" y="736.6" width="2.6" height="2.6" fill="#3a2232"/>
<rect x="429.9" y="736.0" width="1.5" height="1.5" fill="#3a2232"/>
<rect x="515.4" y="658.5" width="8.4" height="8.6" fill="#c3cde4" rx="1"/>
<rect x="525.0" y="659.7" width="3.4" height="3.4" fill="#dfe6f3"/>
<rect x="526.8" y="650.9" width="3.4" height="3.4" fill="#dfe6f3"/>
<rect x="531.4" y="646.9" width="5.0" height="5.0" fill="#c3cde4" rx="1.6"/>
<rect x="531.4" y="651.9" width="3.6" height="3.6" fill="#c3cde4"/>
<rect x="517.8" y="653.5" width="3.4" height="3.4" fill="#dfe6f3"/>
<rect x="514.0" y="650.1" width="1.8" height="1.8" fill="#dfe6f3"/>
<rect x="529.8" y="663.1" width="3.0" height="3.0" fill="#3a2232"/>
<rect x="519.4" y="647.5" width="3.0" height="2.6" fill="#3a2232"/>
<rect x="515.8" y="647.1" width="2.0" height="1.6" fill="#d18450"/>
<rect x="534.8" y="657.1" width="1.6" height="1.6" fill="#d18450"/>
<rect x="566.0" y="658.5" width="8.4" height="8.6" fill="#c3cde4" rx="1"/>
<rect x="575.6" y="659.7" width="3.4" height="3.4" fill="#dfe6f3"/>
<rect x="577.4" y="650.9" width="3.4" height="3.4" fill="#dfe6f3"/>
<rect x="582.0" y="646.9" width="5.0" height="5.0" fill="#c3cde4" rx="1.6"/>
<rect x="582.0" y="651.9" width="3.6" height="3.6" fill="#c3cde4"/>
<rect x="568.4" y="653.5" width="3.4" height="3.4" fill="#dfe6f3"/>
<rect x="564.6" y="650.1" width="1.8" height="1.8" fill="#dfe6f3"/>
<rect x="580.4" y="663.1" width="3.0" height="3.0" fill="#3a2232"/>
<rect x="570.0" y="647.5" width="3.0" height="2.6" fill="#3a2232"/>
<rect x="566.4" y="647.1" width="2.0" height="1.6" fill="#d18450"/>
<rect x="585.4" y="657.1" width="1.6" height="1.6" fill="#d18450"/>
<rect x="465.4" y="759.5" width="8.4" height="8.6" fill="#c3cde4" rx="1"/>
<rect x="475.0" y="760.7" width="3.4" height="3.4" fill="#dfe6f3"/>
<rect x="476.8" y="751.9" width="3.4" height="3.4" fill="#dfe6f3"/>
<rect x="481.4" y="747.9" width="5.0" height="5.0" fill="#c3cde4" rx="1.6"/>
<rect x="481.4" y="752.9" width="3.6" height="3.6" fill="#c3cde4"/>
<rect x="467.8" y="754.5" width="3.4" height="3.4" fill="#dfe6f3"/>
<rect x="464.0" y="751.1" width="1.8" height="1.8" fill="#dfe6f3"/>
<rect x="479.8" y="764.1" width="3.0" height="3.0" fill="#3a2232"/>
<rect x="469.4" y="748.5" width="3.0" height="2.6" fill="#3a2232"/>
<rect x="465.8" y="748.1" width="2.0" height="1.6" fill="#d18450"/>
<rect x="484.8" y="758.1" width="1.6" height="1.6" fill="#d18450"/>
<rect x="517.0" y="553.0" width="7.5" height="7.5" fill="#bcc6dc"/>
<rect x="527.0" y="547.5" width="7.5" height="7.5" fill="#bcc6dc"/>
<rect x="520.0" y="548.0" width="4.0" height="4.0" fill="#c9d2e6"/>
<rect x="527.0" y="558.0" width="4.5" height="4.5" fill="#c9d2e6"/>
<rect x="514.5" y="551.5" width="2.5" height="2.5" fill="#d39a66"/>
<rect x="533.0" y="559.5" width="2.5" height="2.5" fill="#d39a66"/>
<rect x="694.5" y="553.0" width="7.5" height="7.5" fill="#bcc6dc"/>
<rect x="704.5" y="547.5" width="7.5" height="7.5" fill="#bcc6dc"/>
<rect x="697.5" y="548.0" width="4.0" height="4.0" fill="#c9d2e6"/>
<rect x="704.5" y="558.0" width="4.5" height="4.5" fill="#c9d2e6"/>
<rect x="692.0" y="551.5" width="2.5" height="2.5" fill="#d39a66"/>
<rect x="710.5" y="559.5" width="2.5" height="2.5" fill="#d39a66"/>
<rect x="770.5" y="578.0" width="7.5" height="7.5" fill="#bcc6dc"/>
<rect x="780.5" y="572.5" width="7.5" height="7.5" fill="#bcc6dc"/>
<rect x="773.5" y="573.0" width="4.0" height="4.0" fill="#c9d2e6"/>
<rect x="780.5" y="583.0" width="4.5" height="4.5" fill="#c9d2e6"/>
<rect x="768.0" y="576.5" width="2.5" height="2.5" fill="#d39a66"/>
<rect x="786.5" y="584.5" width="2.5" height="2.5" fill="#d39a66"/>
<rect x="847.0" y="578.0" width="7.5" height="7.5" fill="#bcc6dc"/>
<rect x="857.0" y="572.5" width="7.5" height="7.5" fill="#bcc6dc"/>
<rect x="850.0" y="573.0" width="4.0" height="4.0" fill="#c9d2e6"/>
<rect x="857.0" y="583.0" width="4.5" height="4.5" fill="#c9d2e6"/>
<rect x="844.5" y="576.5" width="2.5" height="2.5" fill="#d39a66"/>
<rect x="863.0" y="584.5" width="2.5" height="2.5" fill="#d39a66"/>
<rect x="268.0" y="396.0" width="12.0" height="4.8" fill="#6c7aa0"/>
<rect x="269.0" y="399.6" width="11.0" height="1.2" fill="#8f9dbe"/>
<rect x="307.0" y="396.0" width="12.0" height="4.8" fill="#6c7aa0"/>
<rect x="308.0" y="399.6" width="11.0" height="1.2" fill="#8f9dbe"/>
<rect x="255.0" y="409.0" width="8.0" height="4.8" fill="#6c7aa0"/>
<rect x="256.0" y="412.6" width="7.0" height="1.2" fill="#8f9dbe"/>
<rect x="293.0" y="409.0" width="9.0" height="4.8" fill="#6c7aa0"/>
<rect x="294.0" y="412.6" width="8.0" height="1.2" fill="#8f9dbe"/>
<rect x="270.0" y="421.5" width="10.0" height="4.8" fill="#6c7aa0"/>
<rect x="271.0" y="425.1" width="9.0" height="1.2" fill="#8f9dbe"/>
<rect x="307.0" y="421.5" width="12.0" height="4.8" fill="#6c7aa0"/>
<rect x="308.0" y="425.1" width="11.0" height="1.2" fill="#8f9dbe"/>
<rect x="227.0" y="434.0" width="10.0" height="4.8" fill="#6c7aa0"/>
<rect x="228.0" y="437.6" width="9.0" height="1.2" fill="#8f9dbe"/>
<rect x="255.0" y="434.0" width="9.0" height="4.8" fill="#6c7aa0"/>
<rect x="256.0" y="437.6" width="8.0" height="1.2" fill="#8f9dbe"/>
<rect x="372.0" y="396.0" width="11.0" height="4.8" fill="#6c7aa0"/>
<rect x="373.0" y="399.6" width="10.0" height="1.2" fill="#8f9dbe"/>
<rect x="385.0" y="409.0" width="7.0" height="4.8" fill="#6c7aa0"/>
<rect x="386.0" y="412.6" width="6.0" height="1.2" fill="#8f9dbe"/>
<rect x="438.0" y="421.5" width="10.0" height="4.8" fill="#6c7aa0"/>
<rect x="439.0" y="425.1" width="9.0" height="1.2" fill="#8f9dbe"/>
<rect x="810.0" y="396.0" width="10.0" height="4.8" fill="#6c7aa0"/>
<rect x="811.0" y="399.6" width="9.0" height="1.2" fill="#8f9dbe"/>
<rect x="800.0" y="421.5" width="8.0" height="4.8" fill="#6c7aa0"/>
<rect x="801.0" y="425.1" width="7.0" height="1.2" fill="#8f9dbe"/>
<rect x="786.0" y="409.0" width="8.0" height="4.8" fill="#6c7aa0"/>
<rect x="787.0" y="412.6" width="7.0" height="1.2" fill="#8f9dbe"/>
<rect x="288.3" y="403.4" width="16.4" height="7.2" fill="#262338"/>
<rect x="288.3" y="409.6" width="16.4" height="1.4" fill="#c6d1e6"/>
<rect x="291.9" y="403.4" width="1.5" height="7.2" fill="#c6d1e6"/>
<rect x="299.6" y="403.4" width="1.5" height="7.2" fill="#c6d1e6"/>
<rect x="414.8" y="403.4" width="16.4" height="7.2" fill="#262338"/>
<rect x="414.8" y="409.6" width="16.4" height="1.4" fill="#c6d1e6"/>
<rect x="418.4" y="403.4" width="1.5" height="7.2" fill="#c6d1e6"/>
<rect x="426.1" y="403.4" width="1.5" height="7.2" fill="#c6d1e6"/>
<rect x="821.5" y="403.2" width="16.4" height="7.2" fill="#262338"/>
<rect x="821.5" y="409.4" width="16.4" height="1.4" fill="#c6d1e6"/>
<rect x="825.1" y="403.2" width="1.5" height="7.2" fill="#c6d1e6"/>
<rect x="832.8" y="403.2" width="1.5" height="7.2" fill="#c6d1e6"/>
<rect x="948.5" y="479.4" width="16.4" height="7.2" fill="#262338"/>
<rect x="948.5" y="485.6" width="16.4" height="1.4" fill="#c6d1e6"/>
<rect x="952.1" y="479.4" width="1.5" height="7.2" fill="#c6d1e6"/>
<rect x="959.8" y="479.4" width="1.5" height="7.2" fill="#c6d1e6"/>
<path d="M769.4,415.5 h19.2 v12.6 l-9.6,7.7 l-9.6,-7.700z" fill="#3a2232"/>
<path d="M772.2,415.5 h13.6 v11.3 l-6.800,5.500 l-6.800,-5.500z" fill="#e8452c"/>
<path d="M774.4,415.5 h9.2 v10.2 l-4.600,3.700 l-4.600,-3.700z" fill="#f6a23f"/>
<path d="M775.8,415.5 h6.4 v9.3 l-3.200,2.600 l-3.200,-2.600z" fill="#ee6a5c"/>
<path d="M820.1,415.5 h19.2 v12.6 l-9.6,7.7 l-9.6,-7.700z" fill="#3a2232"/>
<path d="M822.9000000000001,415.5 h13.6 v11.3 l-6.800,5.500 l-6.800,-5.500z" fill="#e8452c"/>
<path d="M825.1,415.5 h9.2 v10.2 l-4.600,3.700 l-4.600,-3.700z" fill="#f6a23f"/>
<path d="M826.5,415.5 h6.4 v9.3 l-3.200,2.600 l-3.200,-2.600z" fill="#ee6a5c"/>
<path d="M896.4,492.29999999999995 h19.2 v12.6 l-9.6,7.7 l-9.6,-7.700z" fill="#3a2232"/>
<path d="M899.2,492.29999999999995 h13.6 v11.3 l-6.800,5.500 l-6.800,-5.500z" fill="#e8452c"/>
<path d="M901.4,492.29999999999995 h9.2 v10.2 l-4.600,3.700 l-4.600,-3.700z" fill="#f6a23f"/>
<path d="M902.8,492.29999999999995 h6.4 v9.3 l-3.200,2.600 l-3.200,-2.600z" fill="#ee6a5c"/>
<rect x="944.2" y="492.3" width="50.8" height="25.0" fill="#262b45" rx="3.5"/>
<rect x="947.3" y="495.2" width="44.6" height="22.1" fill="#8f9dbe" rx="2"/>
<path d="M947.3,496.7H991.9" stroke="#c6d1e6" stroke-width="2.4" stroke-dasharray="4.6 1.4 3 1.4" fill="none"/>
<path d="M948.8,499V517M990.4,499V517" stroke="#aab5cf" stroke-width="2.6" stroke-dasharray="3.4 1.3" fill="none"/>
<rect x="950.6" y="498.7" width="38.4" height="18.6" fill="#262b45"/>
<path d="M953,517.300 l3,-4.300 h27 l3,4.300z" fill="#b9693f"/>
<rect x="1019.7" y="397.3" width="25.8" height="17.4" fill="#3a2232"/>
<rect x="1019.7" y="400.4" width="25.8" height="2.9" fill="#a3afcc"/>
<rect x="1019.7" y="408.0" width="25.8" height="2.9" fill="#a3afcc"/>
<rect x="1023.3" y="392.1" width="6.5" height="23.6" fill="#3a2232" rx="1.2"/>
<rect x="1023.3" y="400.4" width="1.7" height="2.9" fill="#3a2232"/>
<rect x="1028.1" y="400.4" width="1.7" height="2.9" fill="#3a2232"/>
<rect x="1025.0" y="395.9" width="3.1" height="19.8" fill="#dfe6f3"/>
<rect x="1025.0" y="404.7" width="3.1" height="1.0" fill="#aab5cf"/>
<rect x="1025.0" y="412.3" width="3.1" height="1.0" fill="#aab5cf"/>
<rect x="1036.1" y="392.1" width="6.5" height="23.6" fill="#3a2232" rx="1.2"/>
<rect x="1036.1" y="400.4" width="1.7" height="2.9" fill="#3a2232"/>
<rect x="1040.9" y="400.4" width="1.7" height="2.9" fill="#3a2232"/>
<rect x="1037.8" y="395.9" width="3.1" height="19.8" fill="#dfe6f3"/>
<rect x="1037.8" y="404.7" width="3.1" height="1.0" fill="#aab5cf"/>
<rect x="1037.8" y="412.3" width="3.1" height="1.0" fill="#aab5cf"/>
<rect x="1045.0" y="397.3" width="25.8" height="17.4" fill="#3a2232"/>
<rect x="1045.0" y="400.4" width="25.8" height="2.9" fill="#a3afcc"/>
<rect x="1045.0" y="408.0" width="25.8" height="2.9" fill="#a3afcc"/>
<rect x="1048.6" y="392.1" width="6.5" height="23.6" fill="#3a2232" rx="1.2"/>
<rect x="1048.6" y="400.4" width="1.7" height="2.9" fill="#3a2232"/>
<rect x="1053.4" y="400.4" width="1.7" height="2.9" fill="#3a2232"/>
<rect x="1050.3" y="395.9" width="3.1" height="19.8" fill="#dfe6f3"/>
<rect x="1050.3" y="404.7" width="3.1" height="1.0" fill="#aab5cf"/>
<rect x="1050.3" y="412.3" width="3.1" height="1.0" fill="#aab5cf"/>
<rect x="1061.4" y="392.1" width="6.5" height="23.6" fill="#3a2232" rx="1.2"/>
<rect x="1061.4" y="400.4" width="1.7" height="2.9" fill="#3a2232"/>
<rect x="1066.2" y="400.4" width="1.7" height="2.9" fill="#3a2232"/>
<rect x="1063.1" y="395.9" width="3.1" height="19.8" fill="#dfe6f3"/>
<rect x="1063.1" y="404.7" width="3.1" height="1.0" fill="#aab5cf"/>
<rect x="1063.1" y="412.3" width="3.1" height="1.0" fill="#aab5cf"/>
<rect x="283.7" y="727.5" width="25.8" height="17.4" fill="#3a2232"/>
<rect x="283.7" y="730.6" width="25.8" height="2.9" fill="#a3afcc"/>
<rect x="283.7" y="738.2" width="25.8" height="2.9" fill="#a3afcc"/>
<rect x="287.3" y="722.3" width="6.5" height="23.6" fill="#3a2232" rx="1.2"/>
<rect x="287.3" y="730.6" width="1.7" height="2.9" fill="#3a2232"/>
<rect x="292.1" y="730.6" width="1.7" height="2.9" fill="#3a2232"/>
<rect x="289.0" y="726.1" width="3.1" height="19.8" fill="#dfe6f3"/>
<rect x="289.0" y="734.9" width="3.1" height="1.0" fill="#aab5cf"/>
<rect x="289.0" y="742.5" width="3.1" height="1.0" fill="#aab5cf"/>
<rect x="300.1" y="722.3" width="6.5" height="23.6" fill="#3a2232" rx="1.2"/>
<rect x="300.1" y="730.6" width="1.7" height="2.9" fill="#3a2232"/>
<rect x="304.9" y="730.6" width="1.7" height="2.9" fill="#3a2232"/>
<rect x="301.8" y="726.1" width="3.1" height="19.8" fill="#dfe6f3"/>
<rect x="301.8" y="734.9" width="3.1" height="1.0" fill="#aab5cf"/>
<rect x="301.8" y="742.5" width="3.1" height="1.0" fill="#aab5cf"/>
<rect x="309.0" y="727.5" width="25.8" height="17.4" fill="#3a2232"/>
<rect x="309.0" y="730.6" width="25.8" height="2.9" fill="#a3afcc"/>
<rect x="309.0" y="738.2" width="25.8" height="2.9" fill="#a3afcc"/>
<rect x="312.6" y="722.3" width="6.5" height="23.6" fill="#3a2232" rx="1.2"/>
<rect x="312.6" y="730.6" width="1.7" height="2.9" fill="#3a2232"/>
<rect x="317.4" y="730.6" width="1.7" height="2.9" fill="#3a2232"/>
<rect x="314.3" y="726.1" width="3.1" height="19.8" fill="#dfe6f3"/>
<rect x="314.3" y="734.9" width="3.1" height="1.0" fill="#aab5cf"/>
<rect x="314.3" y="742.5" width="3.1" height="1.0" fill="#aab5cf"/>
<rect x="325.4" y="722.3" width="6.5" height="23.6" fill="#3a2232" rx="1.2"/>
<rect x="325.4" y="730.6" width="1.7" height="2.9" fill="#3a2232"/>
<rect x="330.2" y="730.6" width="1.7" height="2.9" fill="#3a2232"/>
<rect x="327.1" y="726.1" width="3.1" height="19.8" fill="#dfe6f3"/>
<rect x="327.1" y="734.9" width="3.1" height="1.0" fill="#aab5cf"/>
<rect x="327.1" y="742.5" width="3.1" height="1.0" fill="#aab5cf"/>
<rect x="334.3" y="727.5" width="25.8" height="17.4" fill="#3a2232"/>
<rect x="334.3" y="730.6" width="25.8" height="2.9" fill="#a3afcc"/>
<rect x="334.3" y="738.2" width="25.8" height="2.9" fill="#a3afcc"/>
<rect x="337.9" y="722.3" width="6.5" height="23.6" fill="#3a2232" rx="1.2"/>
<rect x="337.9" y="730.6" width="1.7" height="2.9" fill="#3a2232"/>
<rect x="342.7" y="730.6" width="1.7" height="2.9" fill="#3a2232"/>
<rect x="339.6" y="726.1" width="3.1" height="19.8" fill="#dfe6f3"/>
<rect x="339.6" y="734.9" width="3.1" height="1.0" fill="#aab5cf"/>
<rect x="339.6" y="742.5" width="3.1" height="1.0" fill="#aab5cf"/>
<rect x="350.7" y="722.3" width="6.5" height="23.6" fill="#3a2232" rx="1.2"/>
<rect x="350.7" y="730.6" width="1.7" height="2.9" fill="#3a2232"/>
<rect x="355.5" y="730.6" width="1.7" height="2.9" fill="#3a2232"/>
<rect x="352.4" y="726.1" width="3.1" height="19.8" fill="#dfe6f3"/>
<rect x="352.4" y="734.9" width="3.1" height="1.0" fill="#aab5cf"/>
<rect x="352.4" y="742.5" width="3.1" height="1.0" fill="#aab5cf"/>
<rect x="285.0" y="746.0" width="77.0" height="5.5" fill="#cf9160"/>
<rect x="284.7" y="439.0" width="25.4" height="22.8" fill="#262b45" rx="4"/>
<rect x="287.4" y="440.0" width="20.0" height="18.6" fill="#aab5cf"/>
<rect x="288.8" y="456.2" width="17.2" height="3.2" fill="#c6d1e6" rx="1.2"/>
<path d="M287.4,452.8h20M287.4,449h2.6M304.79999999999995,449h2.6" stroke="#7d8aad" stroke-width="1" fill="none"/>
<rect x="290.4" y="443.6" width="13.6" height="8.8" fill="#6fe0ad"/>
<rect x="290.4" y="443.6" width="13.6" height="3.4" fill="#58b98f"/>
<rect x="294.8" y="443.6" width="5.2" height="3.4" fill="#6fe0ad"/>
<path d="M290.4,419 h14 l5.5,4 v11 l-5.500,6 h-14 l-5.500,-6 v-11z" fill="#262b45"/>
<rect x="289.8" y="422.6" width="15.2" height="14.4" fill="#8f9dbe" rx="3"/>
<rect x="291.9" y="422.6" width="11.0" height="3.4" fill="#c6d1e6" rx="1.5"/>
<rect x="292.0" y="426.8" width="3.8" height="1.5" fill="#262b45"/>
<rect x="299.0" y="426.8" width="3.8" height="1.5" fill="#262b45"/>
<rect x="292.2" y="430.0" width="10.4" height="4.2" fill="#262b45" rx="1"/>
<rect x="293.6" y="430.0" width="1.6" height="1.6" fill="#eef2fa"/>
<rect x="299.6" y="430.0" width="1.6" height="1.6" fill="#eef2fa"/>
<rect x="295.7" y="431.6" width="3.4" height="19.0" fill="#6fe0ad"/>
<rect x="335.3" y="439.0" width="25.4" height="22.8" fill="#262b45" rx="4"/>
<rect x="338.0" y="440.0" width="20.0" height="18.6" fill="#aab5cf"/>
<rect x="339.4" y="456.2" width="17.2" height="3.2" fill="#c6d1e6" rx="1.2"/>
<path d="M338,452.8h20M338,449h2.6M355.4,449h2.6" stroke="#7d8aad" stroke-width="1" fill="none"/>
<rect x="341.0" y="443.6" width="13.6" height="8.8" fill="#67759b"/>
<path d="M341,419 h14 l5.5,4 v11 l-5.500,6 h-14 l-5.500,-6 v-11z" fill="#262b45"/>
<rect x="340.4" y="422.6" width="15.2" height="14.4" fill="#8f9dbe" rx="3"/>
<rect x="342.5" y="422.6" width="11.0" height="3.4" fill="#c6d1e6" rx="1.5"/>
<rect x="342.6" y="426.8" width="3.8" height="1.5" fill="#262b45"/>
<rect x="349.6" y="426.8" width="3.8" height="1.5" fill="#262b45"/>
<rect x="342.8" y="430.0" width="10.4" height="4.2" fill="#262b45" rx="1"/>
<rect x="344.2" y="430.0" width="1.6" height="1.6" fill="#eef2fa"/>
<rect x="350.2" y="430.0" width="1.6" height="1.6" fill="#eef2fa"/>
<rect x="387.7" y="439.0" width="21.4" height="14.8" fill="#262b45" rx="4"/>
<rect x="390.4" y="440.0" width="16.0" height="10.6" fill="#c6d1e6" rx="1.5"/>
<rect x="393.2" y="440.0" width="10.4" height="7.4" fill="#2b3050"/>
<rect x="395.8" y="440.0" width="1.5" height="7.4" fill="#9aa7c6"/>
<rect x="399.5" y="440.0" width="1.5" height="7.4" fill="#9aa7c6"/>
<rect x="391.0" y="419.0" width="14.8" height="22.0" fill="#262b45" rx="6.5"/>
<rect x="394.8" y="420.4" width="7.2" height="9.0" fill="#c6d1e6" rx="3.4"/>
<rect x="393.8" y="428.6" width="9.2" height="9.4" fill="#8f9dbe" rx="1.5"/>
<rect x="396.4" y="430.6" width="4.0" height="3.0" fill="#4f5a80"/>
<rect x="438.7" y="439.0" width="21.4" height="14.8" fill="#262b45" rx="4"/>
<rect x="441.4" y="440.0" width="16.0" height="10.6" fill="#c6d1e6" rx="1.5"/>
<rect x="444.2" y="440.0" width="10.4" height="7.4" fill="#2b3050"/>
<rect x="446.8" y="440.0" width="1.5" height="7.4" fill="#9aa7c6"/>
<rect x="450.5" y="440.0" width="1.5" height="7.4" fill="#9aa7c6"/>
<rect x="442.0" y="419.0" width="14.8" height="22.0" fill="#262b45" rx="6.5"/>
<rect x="445.8" y="420.4" width="7.2" height="9.0" fill="#c6d1e6" rx="3.4"/>
<rect x="444.8" y="428.6" width="9.2" height="9.4" fill="#8f9dbe" rx="1.5"/>
<rect x="447.4" y="430.6" width="4.0" height="3.0" fill="#4f5a80"/>
<rect x="447.9" y="431.5" width="3.0" height="16.5" fill="#6fe0ad"/>
<rect x="444.8" y="445.0" width="9.2" height="2.6" fill="#58b98f"/>
<rect x="569.4" y="393.3" width="26.8" height="27.9" fill="#62aab0"/>
<rect x="571.0" y="394.9" width="23.6" height="24.7" fill="#8fa596"/>
<rect x="572.3" y="397.0" width="21.0" height="22.6" fill="#2f6a96" rx="6"/>
<rect x="571.0" y="408.0" width="23.6" height="11.6" fill="#2f6a96" rx="2"/>
<circle cx="582.8" cy="407.6" r="8.2" fill="#5d9fcd"/>
<rect x="572.0" y="405.8" width="21.6" height="3.6" fill="#a9bcc0"/>
<rect x="581.0" y="396.0" width="3.6" height="22.6" fill="#a9bcc0"/>
<circle cx="582.8" cy="407.6" r="4.6" fill="#b8c6c8"/><circle cx="582.8" cy="407.6" r="2.2" fill="#9fb3bd"/>
<rect x="569.4" y="393.3" width="26.8" height="27.9" fill="#62aab0" opacity="0.25"/>
<path d="M643.7,451.6 q0,-8.600 8.900,-8.600 q8.900,0 8.900,8.600 v4.2 l3.900,3.300 v5.700 q0,2.600 -2.600,2.600 h-20.400 q-2.600,0 -2.600,-2.600 v-5.700 l3.900,-3.300z" fill="#33203a"/>
<rect x="646.2" y="445.5" width="12.8" height="10.5" fill="#efb583" rx="5.6"/>
<rect x="647.4" y="446.6" width="10.4" height="9.6" fill="#efb583" rx="2.6"/>
<rect x="649.1" y="451.9" width="1.7" height="2.2" fill="#33203a"/>
<rect x="654.4" y="451.9" width="1.7" height="2.2" fill="#33203a"/>
<rect x="647.2" y="457.4" width="10.8" height="7.2" fill="#b9693f" rx="1"/>
<rect x="642.5" y="458.6" width="4.2" height="5.2" fill="#dfe6f3" rx="1.2"/>
<rect x="658.5" y="458.6" width="4.2" height="5.2" fill="#dfe6f3" rx="1.2"/>
<rect x="648.4" y="464.0" width="3.2" height="1.8" fill="#dfe6f3"/>
<rect x="653.6" y="464.0" width="3.2" height="1.8" fill="#dfe6f3"/>
<rect x="647.5" y="454.5" width="10.0" height="3.5" fill="#c9753f" rx="1.5"/>
<path d="M388.5,505 v-6 q0,-7 8,-7.500 h6.500 q6,1 6.500,8 v5.500z" fill="#33203a"/>
<path d="M390.2,503.1 q0,-8.600 8.900,-8.600 q8.900,0 8.900,8.600 v4.2 l3.900,3.300 v5.700 q0,2.600 -2.600,2.600 h-20.400 q-2.600,0 -2.600,-2.600 v-5.700 l3.900,-3.300z" fill="#33203a"/>
<rect x="392.7" y="497.0" width="12.8" height="10.5" fill="#9a4cc0" rx="5.6"/>
<rect x="393.9" y="501.1" width="10.4" height="6.8" fill="#e9c9a9" rx="2.6"/>
<rect x="395.6" y="503.4" width="1.7" height="2.2" fill="#33203a"/>
<rect x="400.9" y="503.4" width="1.7" height="2.2" fill="#33203a"/>
<rect x="393.7" y="508.9" width="10.8" height="7.2" fill="#d8d8e6" rx="1"/>
<rect x="389.0" y="510.1" width="4.2" height="5.2" fill="#a651c9" rx="1.2"/>
<rect x="405.0" y="510.1" width="4.2" height="5.2" fill="#a651c9" rx="1.2"/>
<rect x="394.9" y="515.5" width="3.2" height="1.8" fill="#dfe6f3"/>
<rect x="400.1" y="515.5" width="3.2" height="1.8" fill="#dfe6f3"/>
<path d="M391,503.500 q-0.500,-8.500 6.500,-9 h5 q4.500,1 4.800,6.500 l0,2 h-16.300z" fill="#a651c9"/><rect x="393" y="500.2" width="12" height="2.600" fill="#c77ae0"/>
<path d="M390.1,604.4 q0,-8.600 8.900,-8.600 q8.900,0 8.900,8.600 v4.2 l3.900,3.300 v5.700 q0,2.600 -2.600,2.600 h-20.400 q-2.600,0 -2.600,-2.600 v-5.700 l3.900,-3.300z" fill="#33203a"/>
<rect x="392.6" y="598.3" width="12.8" height="10.5" fill="#b5622f" rx="5.6"/>
<rect x="393.8" y="602.4" width="10.4" height="6.8" fill="#efb583" rx="2.6"/>
<rect x="395.5" y="604.7" width="1.7" height="2.2" fill="#33203a"/>
<rect x="400.8" y="604.7" width="1.7" height="2.2" fill="#33203a"/>
<rect x="393.6" y="610.2" width="10.8" height="7.2" fill="#b9c4dc" rx="1"/>
<rect x="388.9" y="611.4" width="4.2" height="5.2" fill="#b9c4dc" rx="1.2"/>
<rect x="404.9" y="611.4" width="4.2" height="5.2" fill="#b9c4dc" rx="1.2"/>
<rect x="394.8" y="616.8" width="3.2" height="1.8" fill="#dfe6f3"/>
<rect x="400.0" y="616.8" width="3.2" height="1.8" fill="#dfe6f3"/>
<path d="M871.8,653.5 q0,-8.600 8.900,-8.600 q8.900,0 8.900,8.600 v4.2 l3.900,3.300 v5.700 q0,2.600 -2.600,2.600 h-20.400 q-2.600,0 -2.600,-2.600 v-5.700 l3.900,-3.300z" fill="#33203a"/>
<rect x="874.3" y="647.4" width="12.8" height="10.5" fill="#8a4a2c" rx="5.6"/>
<rect x="875.5" y="651.5" width="10.4" height="6.8" fill="#efb583" rx="2.6"/>
<rect x="877.2" y="653.8" width="1.7" height="2.2" fill="#33203a"/>
<rect x="882.5" y="653.8" width="1.7" height="2.2" fill="#33203a"/>
<rect x="875.3" y="659.3" width="10.8" height="7.2" fill="#efb583" rx="1"/>
<rect x="870.6" y="660.5" width="4.2" height="5.2" fill="#efb583" rx="1.2"/>
<rect x="886.6" y="660.5" width="4.2" height="5.2" fill="#efb583" rx="1.2"/>
<rect x="876.5" y="665.9" width="3.2" height="1.8" fill="#c9753f"/>
<rect x="881.7" y="665.9" width="3.2" height="1.8" fill="#c9753f"/>
<path d="M770.7,679.9 q0,-8.600 8.900,-8.600 q8.900,0 8.900,8.600 v4.2 l3.900,3.300 v5.700 q0,2.600 -2.600,2.600 h-20.400 q-2.600,0 -2.600,-2.600 v-5.700 l3.900,-3.300z" fill="#33203a"/>
<path d="M773.2,680.1 q0,-6.300 6.400,-6.300 q6.400,0 6.400,6.300 v5.200 l3.700,3.100 v4.500 h-20.200 v-4.500 l3.700,-3.100z" fill="#bd7a49"/>
<rect x="774.4" y="677.9" width="10.4" height="6.8" fill="#efb583" rx="2.6"/>
<rect x="776.1" y="680.2" width="1.7" height="2.2" fill="#33203a"/>
<rect x="781.4" y="680.2" width="1.7" height="2.2" fill="#33203a"/>
<rect x="774.2" y="685.7" width="10.8" height="7.2" fill="#b35fd0" rx="1"/>
<rect x="769.5" y="686.9" width="4.2" height="5.2" fill="#efb583" rx="1.2"/>
<rect x="785.5" y="686.9" width="4.2" height="5.2" fill="#efb583" rx="1.2"/>
<path d="M973.2,679.9 q0,-8.600 8.900,-8.600 q8.900,0 8.900,8.600 v4.2 l3.900,3.300 v5.700 q0,2.600 -2.600,2.600 h-20.400 q-2.600,0 -2.600,-2.600 v-5.700 l3.900,-3.300z" fill="#33203a"/>
<path d="M975.7,680.1 q0,-6.300 6.400,-6.300 q6.400,0 6.400,6.300 v5.200 l3.700,3.100 v4.500 h-20.200 v-4.500 l3.700,-3.100z" fill="#bd7a49"/>
<rect x="976.9" y="677.9" width="10.4" height="6.8" fill="#efb583" rx="2.6"/>
<rect x="978.6" y="680.2" width="1.7" height="2.2" fill="#33203a"/>
<rect x="983.9" y="680.2" width="1.7" height="2.2" fill="#33203a"/>
<rect x="976.7" y="685.7" width="10.8" height="7.2" fill="#b35fd0" rx="1"/>
<rect x="972.0" y="686.9" width="4.2" height="5.2" fill="#efb583" rx="1.2"/>
<rect x="988.0" y="686.9" width="4.2" height="5.2" fill="#efb583" rx="1.2"/>
<rect x="178.7" y="236.5" width="811.5" height="79.0" fill="#000000" opacity="0.68"/>
<rect x="15.0" y="235.6" width="1049.0" height="1.5" fill="#ec7a64" opacity="0.9"/>
<rect x="178.2" y="178.0" width="1.0" height="58.0" fill="#a9c948" opacity="0.9"/>
<rect x="178.2" y="235.8" width="812.5" height="1.1" fill="#b42b87"/>
<rect x="178.0" y="236.0" width="1.1" height="529.0" fill="#d03aa0"/>
<rect x="989.6" y="236.0" width="1.1" height="529.0" fill="#d03aa0"/>
<g opacity="0.75"><circle cx="182.5" cy="190" r="5" fill="#e9c3a2" stroke="#b08a68" stroke-width="1"/>
<rect x="180.5" y="179" width="4" height="5" fill="#e9c3a2" stroke="#b08a68" stroke-width="0.8"/>
<rect x="180.5" y="196" width="4" height="5" fill="#e9c3a2" stroke="#b08a68" stroke-width="0.8"/>
<rect x="171.5" y="188" width="5" height="4" fill="#e9c3a2" stroke="#b08a68" stroke-width="0.8"/>
<rect x="188.5" y="188" width="5" height="4" fill="#e9c3a2" stroke="#b08a68" stroke-width="0.8"/>
</g>
<g opacity="0.75"><circle cx="178.3" cy="236.3" r="5" fill="#e9c3a2" stroke="#b08a68" stroke-width="1"/>
<rect x="176.3" y="225.3" width="4" height="5" fill="#e9c3a2" stroke="#b08a68" stroke-width="0.8"/>
<rect x="176.3" y="242.3" width="4" height="5" fill="#e9c3a2" stroke="#b08a68" stroke-width="0.8"/>
<rect x="167.3" y="234.3" width="5" height="4" fill="#e9c3a2" stroke="#b08a68" stroke-width="0.8"/>
<rect x="184.3" y="234.3" width="5" height="4" fill="#e9c3a2" stroke="#b08a68" stroke-width="0.8"/>
</g>
<g fill="none" stroke="#f4e6d6" stroke-width="2.4" stroke-linecap="round" stroke-linejoin="round"><path d="M32,199 l3.600,3.600 l-3.600,3.600"/><path d="M50,199 l-3.600,3.600 l3.600,3.600"/><path d="M37.400,193.400 l3.600,3.600 l3.600,-3.600"/><path d="M37.400,211.800 l3.600,-3.600 l3.600,3.600"/></g><rect x="38.5" y="200" width="5" height="5" rx="1" fill="#f4e6d6"/>
<circle cx="90" cy="202.5" r="11.2" fill="#e3e0dd" stroke="#9a7a5c" stroke-width="1.4"/>
<rect x="84.2" y="201.1" width="11.6" height="2.9" fill="#8a6239"/>
<circle cx="219.5" cy="202.5" r="11.2" fill="#e3e0dd" stroke="#9a7a5c" stroke-width="1.4"/>
<rect x="213.7" y="201.1" width="11.6" height="2.9" fill="#8a6239"/>
<rect x="218.05" y="196.7" width="2.9" height="11.6" fill="#8a6239"/>
<rect x="320.0" y="750.5" width="252.0" height="8.5" fill="#f6e6d6" rx="4" opacity="0.42"/>
<rect x="22.0" y="751.8" width="1017.0" height="5.6" fill="#f6e6d6" rx="2.8" opacity="0.10"/>
<rect x="1050.0" y="395.0" width="8.5" height="130.0" fill="#f6e6d6" rx="4" opacity="0.42"/>
<rect x="1052.5" y="184.0" width="4.8" height="554.0" fill="#f6e6d6" rx="2.4" opacity="0.10"/>
</g>
<path d="M19.4,172.5V178.3M39.2,172.5V178.3M59.0,172.5V178.3M78.9,162.5V178.3M98.7,172.5V178.3M118.5,172.5V178.3M138.3,172.5V178.3M158.2,172.5V178.3M178.0,159V178.3M197.8,172.5V178.3M217.7,172.5V178.3M237.5,172.5V178.3M257.3,172.5V178.3M277.1,162.5V178.3M297.0,172.5V178.3M316.8,172.5V178.3M336.6,172.5V178.3M356.5,172.5V178.3M376.3,159V178.3M396.1,172.5V178.3M416.0,172.5V178.3M435.8,172.5V178.3M455.6,172.5V178.3M475.4,162.5V178.3M495.3,172.5V178.3M515.1,172.5V178.3M534.9,172.5V178.3M554.8,172.5V178.3M574.6,159V178.3M594.4,172.5V178.3M614.3,172.5V178.3M634.1,172.5V178.3M653.9,172.5V178.3M673.8,162.5V178.3M693.6,172.5V178.3M713.4,172.5V178.3M733.2,172.5V178.3M753.1,172.5V178.3M772.9,159V178.3M792.7,172.5V178.3M812.6,172.5V178.3M832.4,172.5V178.3M852.2,172.5V178.3M872.0,162.5V178.3M891.9,172.5V178.3M911.7,172.5V178.3M931.5,172.5V178.3M951.4,172.5V178.3M971.2,159V178.3M991.0,172.5V178.3M1010.9,172.5V178.3M1030.7,172.5V178.3M1050.5,172.5V178.3M10.2,196.6H15.3M10.2,216.5H15.3M0,236.3H15.3M10.2,256.1H15.3M10.2,276.0H15.3M10.2,295.8H15.3M10.2,315.6H15.3M1,335.4H15.3M10.2,355.3H15.3M10.2,375.1H15.3M10.2,394.9H15.3M10.2,414.8H15.3M0,434.6H15.3M10.2,454.4H15.3M10.2,474.3H15.3M10.2,494.1H15.3M10.2,513.9H15.3M1,533.8H15.3M10.2,553.6H15.3M10.2,573.4H15.3M10.2,593.2H15.3M10.2,613.1H15.3M0,632.9H15.3M10.2,652.7H15.3M10.2,672.6H15.3M10.2,692.4H15.3M10.2,712.2H15.3M1,732.0H15.3M10.2,751.9H15.3" stroke="#8b8e95" stroke-width="1" fill="none"/>
<text x="180.5" y="171.5" font-family="Liberation Sans" font-size="12.8" fill="#9a9da3">0</text>
<text x="378.8" y="171.5" font-family="Liberation Sans" font-size="12.8" fill="#9a9da3">250</text>
<text x="577.1" y="171.5" font-family="Liberation Sans" font-size="12.8" fill="#9a9da3">500</text>
<text x="775.4" y="171.5" font-family="Liberation Sans" font-size="12.8" fill="#9a9da3">750</text>
<text x="973.7" y="171.5" font-family="Liberation Sans" font-size="12.8" fill="#9a9da3">1000</text>
<text transform="translate(11.5,233.8) rotate(-90)" font-family="Liberation Sans" font-size="12.8" fill="#9a9da3">0</text>
<text transform="translate(11.5,432.1) rotate(-90)" font-family="Liberation Sans" font-size="12.8" fill="#9a9da3">250</text>
<text transform="translate(11.5,630.4) rotate(-90)" font-family="Liberation Sans" font-size="12.8" fill="#9a9da3">500</text>
<text x="539" y="265.8" font-family="Liberation Sans" font-size="26" fill="#ffffff" stroke="#ffffff" stroke-width="0.5" textLength="89" lengthAdjust="spacingAndGlyphs">Level 11</text>
<text x="527" y="302.1" font-family="Liberation Sans" font-size="15.5" fill="#ffffff" stroke="#ffffff" stroke-width="0.35" textLength="114.5" lengthAdjust="spacingAndGlyphs">EXP: 1234/9999</text>
<text x="121.5" y="210.5" font-family="Liberation Sans" font-size="22.5" fill="#f4f4f4" stroke="#4a3a2c" stroke-width="2.2" paint-order="stroke" textLength="66.5" lengthAdjust="spacingAndGlyphs">51.5 %</text>
<rect x="-3" y="157.4" width="1065.6" height="605.3" rx="3" fill="none" stroke="#70bafa" stroke-opacity="0.5" stroke-width="2.8"/>
</svg>
<div class="t" style="left:111.9px;top:9.3px;font-size:22px;color:#d9d9d9;letter-spacing:-0.166px;font-weight:bold;">main_scene.tscn - PixelRPG</div>
<div class="t" style="left:659.7px;top:10.1px;font-size:23px;color:#70b5f5;letter-spacing:1.355px;font-weight:bold;">2D</div>
<div class="t" style="left:745.5px;top:10.1px;font-size:23px;color:#dedede;letter-spacing:1.355px;font-weight:bold;">3D</div>
<div class="t" style="left:831.1px;top:10.1px;font-size:23px;color:#dedede;letter-spacing:0.494px;font-weight:bold;">Script</div>
<div class="t" style="left:953.1px;top:10.1px;font-size:23px;color:#dedede;letter-spacing:0.289px;font-weight:bold;">AssetLib</div>
<div class="t" style="left:39.4px;top:66.5px;font-size:22.5px;color:#84878d;letter-spacing:0.021px;">game_map</div>
<div class="t" style="left:216.7px;top:66.5px;font-size:22.5px;color:#dcdcdc;letter-spacing:-0.334px;">main_scene</div>
<div class="t" style="left:439.8px;top:66.5px;font-size:22.5px;color:#84878d;letter-spacing:0.266px;">player</div>
<div class="t" style="left:811.0px;top:117.3px;font-size:22.5px;color:#dcdcdc;letter-spacing:0.017px;">View</div>
<div class="t" style="left:1093.0px;top:66.6px;font-size:22.5px;color:#84878d;letter-spacing:0.408px;">Node</div>
<div class="t" style="left:1181.5px;top:66.6px;font-size:22.5px;color:#84878d;letter-spacing:1.469px;">Import</div>
<div class="t" style="left:1285.8px;top:66.6px;font-size:22.5px;color:#84878d;letter-spacing:0.601px;">History</div>
<div class="t" style="left:1392.0px;top:66.6px;font-size:22.5px;color:#dcdcdc;letter-spacing:-0.947px;">Scene</div>
<div class="t" style="left:1190.0px;top:117.8px;font-size:22.5px;color:#b0b2b7;letter-spacing:0.266px;">Filter: name, t:type, g:grou</div>
<div class="t" style="left:1147.2px;top:174.3px;font-size:22.5px;color:#d4d4d4;letter-spacing:-0.444px;">MainScene</div>
<div class="t" style="left:1165.4px;top:216.4px;font-size:22.5px;color:#d4d4d4;letter-spacing:0.229px;">Gamemap</div>
<div class="t" style="left:1165.4px;top:258.8px;font-size:22.5px;color:#d4d4d4;letter-spacing:-0.093px;">Player</div>
<div class="t" style="left:1165.4px;top:301.0px;font-size:22.5px;color:#d4d4d4;letter-spacing:-0.516px;">HUD</div>
<div class="t" style="left:1184.0px;top:343.5px;font-size:22.5px;color:#d4d4d4;letter-spacing:-0.203px;">LevelLabel</div>
<div class="t" style="left:1184.0px;top:385.6px;font-size:22.5px;color:#d4d4d4;letter-spacing:-0.245px;">ExpLabel</div>
<div class="t" style="left:1093.6px;top:568.0px;font-size:22.5px;color:#dcdcdc;letter-spacing:-0.529px;">FileSystem</div>
<div class="t" style="left:1152.7px;top:619.2px;font-size:22.5px;color:#d4d4d4;letter-spacing:-0.103px;">res://scenes/main_scene.tscn</div>
<div class="t" style="left:1091.4px;top:669.4px;font-size:22.5px;color:#b0b2b7;letter-spacing:-0.122px;">Filter Files</div>
<div class="t" style="left:1147.0px;top:725.9px;font-size:22.5px;color:#d4d4d4;letter-spacing:-0.041px;">Favorites:</div>
<div class="t" style="left:1147.0px;top:768.3px;font-size:22.5px;color:#d4d4d4;letter-spacing:0.620px;">res://</div>
<svg style="left:0;top:0" width="1560" height="784" viewBox="0 0 1560 784">
<g transform="translate(629.30,7.60) scale(1.586)"><g fill="none" stroke="#70b5f5" stroke-width="2"><path d="M4.2,13.4V4.2H13.4"/><path d="M10.9,1.4 13.7,4.2 10.9,7"/><path d="M1.4,10.9 4.2,13.7 7,10.9"/></g></g>
<g transform="translate(715.40,7.00) scale(1.586)"><g fill="none" stroke="#e0e0e0" stroke-width="2"><path d="M4,2.5V12H13.5"/><path d="M1.7,4.7 4,2.4 6.3,4.7" stroke-linejoin="miter"/><path d="M11.3,9.7 13.6,12 11.3,14.3"/><path d="M4,12 11.5,4.5"/><path d="M7.5,4H12V8.5"/></g></g>
<g transform="translate(800.20,6.80) scale(1.586)"><path d="M6 1v1a1 1 0 0 0-1 1v10H4v-2H2v2a1 1 0 0 0 .5.87A1 1 0 0 0 3 14v1h7a2 2 0 0 0 2-2V5h3V3a2 2 0 0 0-2-2z" fill="#e0e0e0"/><path d="M5,3v10a2,2 0 0 1-2,2a1.800,1.800 0 0 0 3.300,-1V3a1,1 0 0 1 .7-1A1,1 0 0 0 5,3z" fill="#b9b9b9"/><path d="M1.200,10.600h3v2.400a1.500,1.500 0 0 1-3,0z" fill="#cfcfcf"/></g>
<g transform="translate(922.80,6.50) scale(1.586)"><path d="M7 1v5.586L4.707 4.293 3.293 5.707 8 10.414l4.707-4.707-1.414-1.414L9 6.586V1zM1 11v2a2 2 0 0 0 2 2h10a2 2 0 0 0 2-2v-2h-2v2H3v-2z" fill="#e0e0e0"/></g>
<g transform="translate(8.71,63.51) scale(1.586)"><circle cx="8" cy="8" r="5" fill="none" stroke="#8da5f3" stroke-width="2"/></g>
<g transform="translate(186.31,63.51) scale(1.586)"><circle cx="8" cy="8" r="5" fill="none" stroke="#8da5f3" stroke-width="2"/></g>
<path d="M355.6,70.1 370.4,84.9M370.4,70.1 355.6,84.9" stroke="#f0f0f0" stroke-width="3" fill="none"/>
<path d="M537.2,76.6H558.8M548,65.8V87.4" stroke="#8a8d94" stroke-width="3" fill="none"/>
<g transform="translate(410.60,64.00) scale(1.586)"><g fill="none" stroke="#8da5f3" stroke-width="2.35" stroke-linecap="round" stroke-linejoin="round"><path d="M8.6,7 7.4,10.2"/><path d="M8.6,7.6 4.6,8.4 3.2,5.6"/><path d="M8.8,7.4 11.8,8.2 12.8,10"/><path d="M7.4,10.2 4.4,12.6 2,14"/><path d="M7.4,10.2 10,12.2 13,11.6"/></g><rect x="5.9" y="1" width="5.300" height="5.500" rx="0.9" fill="#8da5f3"/><rect x="6.400" y="2.700" width="1.300" height="1.600" fill="#252b34"/></g>
<g transform="translate(1030.31,63.31) scale(1.586)"><g fill="#e0e0e0"><path d="M1,1h5l-1.8,1.8 2.4,2.4-1.4,1.4-2.4-2.4L1,6z"/><path d="M15,1v5l-1.8-1.8-2.4,2.4-1.4-1.4 2.4-2.4L10,1z"/><path d="M1,15v-5l1.8,1.8 2.4-2.4 1.4,1.4-2.4,2.4L6,15z"/><path d="M15,15h-5l1.8-1.8-2.4-2.4 1.4-1.4 2.4,2.4L15,10z"/></g></g>
<g transform="translate(10.8,116.7) scale(1.586)"><path d="M0,0 11.9,5.5 7.5,6.7 10.9,10.1 9.3,11.7 5.9,8.3 4.6,11.9z" fill="#70b5f5"/></g>
<g transform="translate(65.81,113.31) scale(1.586)"><g fill="none" stroke="#e0e0e0" stroke-width="2.2"><path d="M5.8,4.2 8,2 10.2,4.2"/><path d="M5.8,11.8 8,14 10.2,11.8"/><path d="M4.2,5.8 2,8 4.2,10.2"/><path d="M11.8,5.8 14,8 11.800,10.200"/></g><circle cx="8" cy="8" r="2.1" fill="#e0e0e0"/></g>
<g transform="translate(115.01,113.31) scale(1.586)"><path d="M3.6,12A5.6,5.6 0 1 1 12.6,11.4" fill="none" stroke="#e0e0e0" stroke-width="2"/><path d="M1.5,9.8V14.8H7.5z" fill="#e0e0e0"/><circle cx="8" cy="8" r="2" fill="#e0e0e0"/></g>
<g transform="translate(164.61,113.31) scale(1.586)"><g fill="#e0e0e0"><path d="M9,1h6v6h-2V4.4l-2.1,2.1-1.4-1.4L11.6,3H9z"/><path d="M7,15H1V9h2v2.6l2.1-2.1 1.4,1.4L4.4,13H7z"/><circle cx="8" cy="8" r="2"/></g></g>
<g transform="translate(223.21,114.01) scale(1.586)"><g fill="#e0e0e0"><path d="M1,1h11v5h-9v2h5v2h-5v3h5v2h-7zM3,3v1.2h7V3z"/><path d="M8,8l7,2.6-2.7,1.2 2.4,2.4-1.2,1.2-2.4-2.4-1.2,2.7z"/></g></g>
<g transform="translate(272.81,113.31) scale(1.586)"><g fill="#767a83"><rect x="7" y="1" width="2" height="4"/><rect x="1" y="7" width="4" height="2"/><rect x="11" y="7" width="4" height="2"/><path d="M7.5,7.5l7.5,2.8-2.9,1.3 2.4,2.4-1.3,1.3-2.4-2.4-1.3,2.9z"/></g></g>
<g transform="translate(321.91,113.31) scale(1.586)"><path d="M8,1.2a1,1 0 0 0-1,1V8H6.6V3.2a1,1 0 0 0-2,0V9.6L3.4,8.3a1.15,1.15 0 0 0-1.8,1.4l2.6,3.9a3,3 0 0 0 2.6,1.4H11a3,3 0 0 0 3-3V4.2a1,1 0 0 0-2,0V8h-.4V2.6a1,1 0 0 0-2,0V8H9V2.2a1,1 0 0 0-1-1z" fill="#e0e0e0"/></g>
<g transform="translate(371.01,113.31) scale(1.586)"><path d="M1,1.4V15H15zM3.6,8.6 7.8,12.6H3.6z" fill="#e0e0e0" fill-rule="evenodd"/></g>
<g transform="translate(432.10,113.88) scale(1.586)"><g><path d="M5,14.2V10.5a3.2,3.2 0 0 1 6.4,0V14.2" fill="none" stroke="#e0e0e0" stroke-width="2.1"/><rect x="3.95" y="12.6" width="2.1" height="1.8" fill="#fff"/><rect x="10.35" y="12.6" width="2.1" height="1.8" fill="#fff"/><g fill="#e0e0e0"><rect x="1.2" y="2.6" width="1.9" height="1.9"/><rect x="5.6" y="2.6" width="1.9" height="1.9"/><rect x="1.2" y="7.4" width="1.9" height="1.9"/></g></g></g>
<g transform="translate(477.61,112.41) scale(1.586)"><g><path d="M4,1V15M9.6,1V7M1,4H15M1,9.4H7.5M1,14H5" fill="none" stroke="#e0e0e0" stroke-width="1.5"/><path d="M8.2,14.6V11.2a2.9,2.9 0 0 1 5.8,0V14.6" fill="none" stroke="#e0e0e0" stroke-width="2.1"/><rect x="7.15" y="13" width="2.1" height="1.8" fill="#fff"/><rect x="12.95" y="13" width="2.1" height="1.8" fill="#fff"/></g></g>
<circle cx="541.2" cy="117.5" r="3.3" fill="#e0e0e0"/>
<circle cx="541.2" cy="126.4" r="3.3" fill="#e0e0e0"/>
<circle cx="541.2" cy="135.4" r="3.3" fill="#e0e0e0"/>
<g transform="translate(587.01,113.61) scale(1.586)"><path d="M8,1A4,4 0 0 0 4,5V7H2.6V14.6H13.4V7H12V5A4,4 0 0 0 8,1zM8,3A2,2 0 0 1 10,5V7H6V5A2,2 0 0 1 8,3zM7.2,9.6H8.8V12H7.2z" fill="#7c8089" fill-rule="evenodd"/></g>
<g transform="translate(636.31,113.61) scale(1.586)"><g fill="#7c8089"><path d="M1,6.6H9.4V15H1z" opacity="0.8"/><path d="M6.6,1H15V9.4H6.6z" opacity="0.55"/><rect x="1" y="1" width="2" height="2"/><rect x="13" y="1" width="2" height="2"/><rect x="1" y="13" width="2" height="2"/><rect x="13" y="13" width="2" height="2"/></g></g>
<g transform="translate(695.11,113.61) scale(1.586)"><g fill="#f0f0f0"><path d="M4.2,9.6 9.6,4.2 11.8,6.4 6.4,11.8z"/><circle cx="10.6" cy="3.4" r="2.3"/><circle cx="12.6" cy="5.4" r="2.3"/><circle cx="3.4" cy="10.6" r="2.3"/><circle cx="5.4" cy="12.6" r="2.3"/></g></g>
<g transform="translate(752.66,114.80) scale(1.586)"><g fill="#5a6a9e"><circle cx="4.6" cy="5.2" r="2.9"/><circle cx="9.8" cy="4.6" r="3.4"/><path d="M2.6,7h9.2a1,1 0 0 1 1,1v.8l2.6-1.5v5.2l-2.6-1.5v1a1,1 0 0 1-1,1H3.6a1,1 0 0 1-1-1z"/></g></g>
<circle cx="1546.8" cy="67.6" r="3.2" fill="#8a8d94"/>
<circle cx="1546.8" cy="76.5" r="3.2" fill="#8a8d94"/>
<circle cx="1546.8" cy="85.4" r="3.2" fill="#8a8d94"/>
<circle cx="1546.8" cy="568.9" r="3.2" fill="#8a8d94"/>
<circle cx="1546.8" cy="577.7" r="3.2" fill="#8a8d94"/>
<circle cx="1546.8" cy="586.5" r="3.2" fill="#8a8d94"/>
<path d="M1093.6,128.8H1115.6M1104.6,117.8V139.8" stroke="#f0f0f0" stroke-width="3.1" fill="none"/>
<g transform="translate(1140.24,115.04) scale(1.72)"><g fill="none" stroke="#e0e0e0" stroke-width="2.1" stroke-linecap="round"><path d="M6.6,9.4a2.6,2.6 0 0 1 0-3.7l2.2-2.2a2.6,2.6 0 0 1 3.7,3.7l-1,1"/><path d="M9.4,6.6a2.6,2.6 0 0 1 0,3.7l-2.2,2.2a2.6,2.6 0 0 1-3.7-3.7l1-1"/></g></g>
<g transform="translate(1469.58,116.98) scale(1.586)"><circle cx="6.3" cy="6.3" r="4" fill="none" stroke="#e0e0e0" stroke-width="2.3"/><path d="M9.2,9.2 13.6,13.6" stroke="#e0e0e0" stroke-width="2.6" stroke-linecap="round"/></g>
<g transform="translate(1475.88,667.88) scale(1.586)"><circle cx="6.3" cy="6.3" r="4" fill="none" stroke="#e0e0e0" stroke-width="2.3"/><path d="M9.2,9.2 13.6,13.6" stroke="#e0e0e0" stroke-width="2.6" stroke-linecap="round"/></g>
<circle cx="1531" cy="119.4" r="3.3" fill="#e0e0e0"/>
<circle cx="1531" cy="128.6" r="3.3" fill="#e0e0e0"/>
<circle cx="1531" cy="137.7" r="3.3" fill="#e0e0e0"/>
<path d="M1098.2,206V311.6M1098.2,227H1126M1098.2,269.5H1126M1098.2,311.6H1107M1116.5,334V396.2M1116.5,354H1144M1116.5,396.2H1144" stroke="#3f444d" stroke-width="1.3" fill="none"/>
<g transform="translate(1085.24,171.44) scale(1.62)"><path d="M4,6.4 8,10.4 12,6.4" fill="none" stroke="#8a8d94" stroke-width="2.2"/></g>
<g transform="translate(1103.84,298.24) scale(1.62)"><path d="M4,6.4 8,10.4 12,6.4" fill="none" stroke="#8a8d94" stroke-width="2.2"/></g>
<g transform="translate(1085.24,764.04) scale(1.62)"><path d="M4,6.4 8,10.4 12,6.4" fill="none" stroke="#8a8d94" stroke-width="2.2"/></g>
<g transform="translate(1113.11,172.21) scale(1.586)"><circle cx="8" cy="8" r="5" fill="none" stroke="#8da5f3" stroke-width="2"/></g>
<g transform="translate(1131.71,214.31) scale(1.586)"><circle cx="8" cy="8" r="5" fill="none" stroke="#8da5f3" stroke-width="2"/></g>
<g transform="translate(1132.23,256.21) scale(1.586)"><g fill="none" stroke="#8da5f3" stroke-width="2.35" stroke-linecap="round" stroke-linejoin="round"><path d="M8.6,7 7.4,10.2"/><path d="M8.6,7.6 4.6,8.4 3.2,5.6"/><path d="M8.8,7.4 11.8,8.2 12.8,10"/><path d="M7.4,10.2 4.4,12.6 2,14"/><path d="M7.4,10.2 10,12.2 13,11.6"/></g><rect x="5.9" y="1" width="5.300" height="5.500" rx="0.9" fill="#8da5f3"/><rect x="6.400" y="2.700" width="1.300" height="1.600" fill="#20252d"/></g>
<rect x="1133.8" y="300.2" width="21.8" height="21.9" fill="#8eef97"/><rect x="1137.2" y="303.6" width="15" height="15.1" fill="#20252d"/>
<svg x="1138.6" y="305" width="12.4" height="12.6" viewBox="0 0 12 12" preserveAspectRatio="none"><rect width="12" height="12" fill="#7fe84a"/><path d="M0,0H7L0,7z" fill="#ee4a42"/><path d="M12,12H5L12,5z" fill="#4fc3f7"/></svg>
<g transform="translate(1150.71,341.11) scale(1.586)"><path d="M5.6,2.9H14.4a.6,.6 0 0 1 .6,.6v9a.6,.6 0 0 1-.6,.6H5.6L1,8z" fill="#8eef97"/><circle cx="4.9" cy="8" r="1.1" fill="#20252d"/></g>
<g transform="translate(1150.71,383.51) scale(1.586)"><path d="M5.6,2.9H14.4a.6,.6 0 0 1 .6,.6v9a.6,.6 0 0 1-.6,.6H5.6L1,8z" fill="#8eef97"/><circle cx="4.9" cy="8" r="1.1" fill="#20252d"/></g>
<g transform="translate(1515.91,171.31) scale(1.586)"><path d="M8,2.2C4.6,2.2 2.1,4.6 1,8c1.1,3.4 3.6,5.8 7,5.8s5.900-2.400 7-5.800C13.900,4.600 11.400,2.200 8,2.200z" fill="#e0e0e0"/><circle cx="8" cy="8" r="4.1" fill="#20252d"/><circle cx="8" cy="8" r="1.9" fill="#e0e0e0"/></g>
<g transform="translate(1515.91,213.61) scale(1.586)"><path d="M8,2.2C4.6,2.2 2.1,4.6 1,8c1.1,3.4 3.6,5.8 7,5.8s5.900-2.400 7-5.800C13.900,4.600 11.400,2.200 8,2.200z" fill="#e0e0e0"/><circle cx="8" cy="8" r="4.1" fill="#20252d"/><circle cx="8" cy="8" r="1.9" fill="#e0e0e0"/></g>
<g transform="translate(1515.91,256.01) scale(1.586)"><path d="M8,2.2C4.6,2.2 2.1,4.6 1,8c1.1,3.4 3.6,5.8 7,5.8s5.900-2.400 7-5.800C13.900,4.600 11.400,2.200 8,2.200z" fill="#e0e0e0"/><circle cx="8" cy="8" r="4.1" fill="#20252d"/><circle cx="8" cy="8" r="1.9" fill="#e0e0e0"/></g>
<g transform="translate(1515.91,298.41) scale(1.586)"><path d="M8,2.2C4.6,2.2 2.1,4.6 1,8c1.1,3.4 3.6,5.8 7,5.8s5.900-2.400 7-5.800C13.900,4.600 11.400,2.200 8,2.200z" fill="#e0e0e0"/><circle cx="8" cy="8" r="4.1" fill="#20252d"/><circle cx="8" cy="8" r="1.9" fill="#e0e0e0"/></g>
<g transform="translate(1515.91,340.81) scale(1.586)"><path d="M8,2.2C4.6,2.2 2.1,4.6 1,8c1.1,3.4 3.6,5.8 7,5.8s5.900-2.400 7-5.800C13.900,4.600 11.400,2.200 8,2.200z" fill="#e0e0e0"/><circle cx="8" cy="8" r="4.1" fill="#20252d"/><circle cx="8" cy="8" r="1.9" fill="#e0e0e0"/></g>
<g transform="translate(1515.91,383.11) scale(1.586)"><path d="M8,2.2C4.6,2.2 2.1,4.6 1,8c1.1,3.4 3.6,5.8 7,5.8s5.900-2.400 7-5.800C13.900,4.600 11.400,2.200 8,2.200z" fill="#e0e0e0"/><circle cx="8" cy="8" r="4.1" fill="#20252d"/><circle cx="8" cy="8" r="1.9" fill="#e0e0e0"/></g>
<g transform="translate(1478.41,171.41) scale(1.586)"><path d="M6 1v1a1 1 0 0 0-1 1v10H4v-2H2v2a1 1 0 0 0 .5.87A1 1 0 0 0 3 14v1h7a2 2 0 0 0 2-2V5h3V3a2 2 0 0 0-2-2z" fill="#e0e0e0"/><path d="M5,3v10a2,2 0 0 1-2,2a1.800,1.800 0 0 0 3.300,-1V3a1,1 0 0 1 .7-1A1,1 0 0 0 5,3z" fill="#b9b9b9"/><path d="M1.200,10.600h3v2.400a1.500,1.500 0 0 1-3,0z" fill="#cfcfcf"/></g>
<g transform="translate(1478.41,213.61) scale(1.586)"><g fill="#e0e0e0"><path d="M1,6.6H15V14a1,1 0 0 1-1,1H2a1,1 0 0 1-1-1z"/><g transform="rotate(-7 1 4.4)"><rect x="1" y="3.2" width="2.4" height="2"/><rect x="4.6" y="3.2" width="2.4" height="2"/><rect x="8.2" y="3.2" width="2.4" height="2"/><rect x="11.8" y="3.2" width="2.6" height="2"/></g></g><path d="M5.2,8.6H10.8L8,12.4z" fill="#20252d"/></g>
<g transform="translate(1441.31,255.91) scale(1.586)"><g fill="#e0e0e0"><path d="M1,6.6H15V14a1,1 0 0 1-1,1H2a1,1 0 0 1-1-1z"/><g transform="rotate(-7 1 4.4)"><rect x="1" y="3.2" width="2.4" height="2"/><rect x="4.6" y="3.2" width="2.4" height="2"/><rect x="8.2" y="3.2" width="2.4" height="2"/><rect x="11.8" y="3.2" width="2.6" height="2"/></g></g><path d="M5.2,8.6H10.8L8,12.4z" fill="#20252d"/></g>
<g transform="translate(1478.41,256.61) scale(1.586)"><path d="M6 1v1a1 1 0 0 0-1 1v10H4v-2H2v2a1 1 0 0 0 .5.87A1 1 0 0 0 3 14v1h7a2 2 0 0 0 2-2V5h3V3a2 2 0 0 0-2-2z" fill="#e0e0e0"/><path d="M5,3v10a2,2 0 0 1-2,2a1.800,1.800 0 0 0 3.300,-1V3a1,1 0 0 1 .7-1A1,1 0 0 0 5,3z" fill="#b9b9b9"/><path d="M1.200,10.600h3v2.400a1.500,1.500 0 0 1-3,0z" fill="#cfcfcf"/></g>
<path d="M1102.6,620.5 1095.4,630.3 1102.6,640.1" fill="none" stroke="#f0f0f0" stroke-width="3.2"/>
<path d="M1124.6,620.5 1131.8,630.3 1124.6,640.1" fill="none" stroke="#73777f" stroke-width="3.2"/>
<g transform="translate(1518.11,667.21) scale(1.586)"><g fill="#e0e0e0"><path d="M4,1 7,4.6H5V11.4H7L4,15 1,11.400H3V4.600H1z"/><rect x="9" y="2" width="6" height="2"/><rect x="9" y="7" width="4" height="2"/><rect x="9" y="12" width="2" height="2"/></g></g>
<g transform="translate(1114.70,725.10) scale(1.5)"><path d="M8,1.6 10,6 14.8,6.500 11.200,9.700 12.200,14.400 8,12 3.800,14.400 4.800,9.700 1.200,6.500 6,6z" fill="#e0e0e0" stroke="#e0e0e0" stroke-width="0.6" stroke-linejoin="round"/></g>
<g transform="translate(1113.41,766.13) scale(1.586)"><path d="M2,2A1,1 0 0 0 1,3V14a1,1 0 0 0 1,1H14a1,1 0 0 0 1-1V5.500A1,1 0 0 0 14,4.500H8.500L7,2.400A1,1 0 0 0 6.200,2z" fill="#8fb8e8"/></g>
</svg>

</body></html>
